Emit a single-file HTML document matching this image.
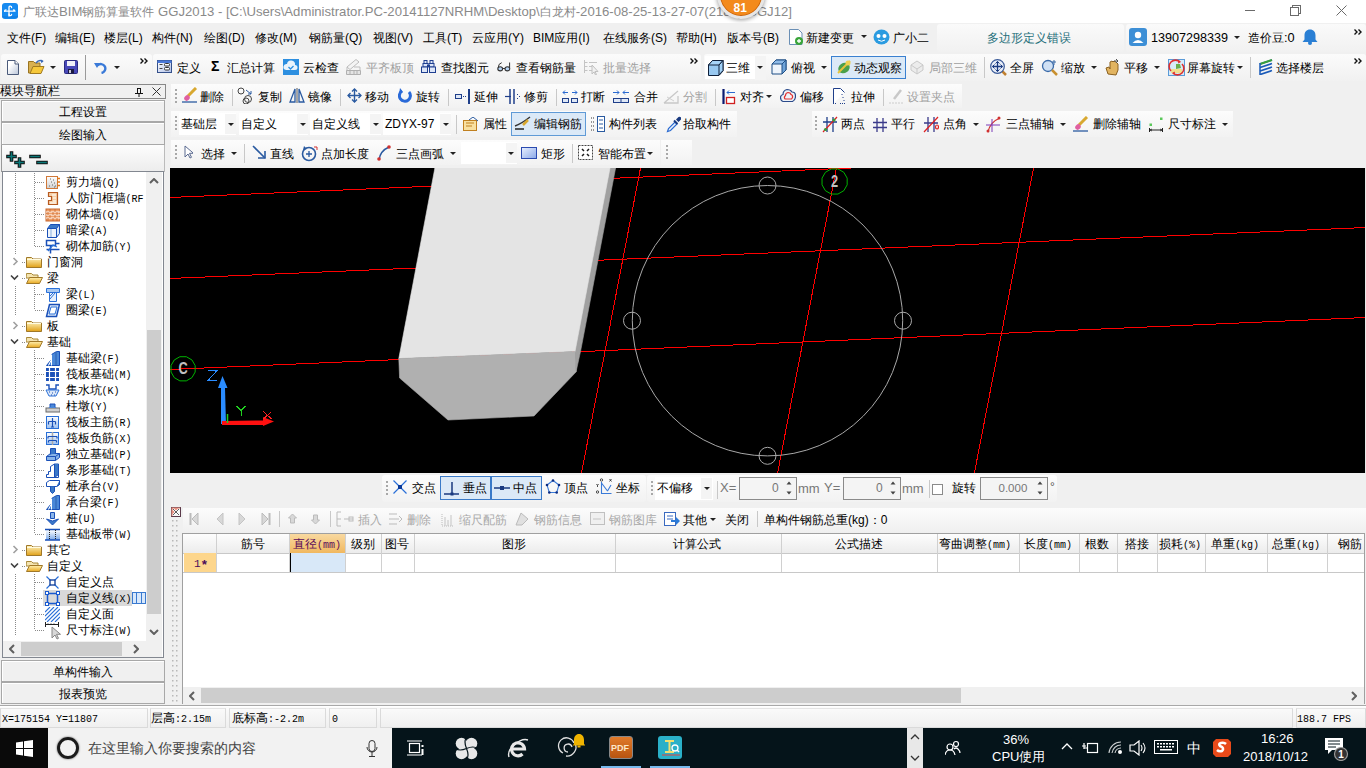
<!DOCTYPE html><html><head><meta charset="utf-8"><style>
*{margin:0;padding:0;box-sizing:border-box}
html,body{width:1366px;height:768px;overflow:hidden;background:#f0f0f0;font-family:'Liberation Sans',sans-serif;font-size:12px;color:#000}
.t{position:absolute;white-space:nowrap}
.m{font-family:'Liberation Mono',monospace;font-size:10px}
svg{display:block}
</style></head><body>
<div style="position:absolute;left:0px;top:0px;width:1366px;height:23px;background:#fff"></div>
<svg style="position:absolute;left:2px;top:3px;" width="16" height="16" viewBox="0 0 16 16"><rect x="0" y="0" width="16" height="16" rx="3" fill="#168af0"/><path d="M0 14h16v-1.5" stroke="#0a6ac8" stroke-width="1" fill="none" opacity=".5"/><g stroke="#fff" stroke-width="1.3" fill="none" stroke-linecap="round"><path d="M7 13V4.2a1.3 1.3 0 0 1 2.6 .3"/><path d="M7 11.2a1.3 1.3 0 0 0 2.6 .3"/><path d="M2.6 8.2h10.3a1.4 1.4 0 0 0-1.4-1.4"/><path d="M2.6 8.2a1.4 1.4 0 0 1 1.4-1.4"/></g></svg>
<div class="t" style="left:23px;top:3.5px;font-size:13.15px;line-height:16px;color:#8a8a8a;font-family:'Liberation Sans',sans-serif;"><span style="font-size:12px">广联达</span>BIM<span style="font-size:12px">钢筋算量软件</span> GGJ2013 - [C:\Users\Administrator.PC-20141127NRHM\Desktop\<span style="font-size:12px">白龙村</span>-2016-08-25-13-27-07(2188)-GGJ12]</div>
<div style="position:absolute;left:717px;top:-29px;width:48px;height:48px;border-radius:50%;background:#f38a1c;border:3px solid #e6e6e6;box-shadow:0 1px 4px rgba(0,0,0,.4), inset 0 0 0 1px #c8620c"></div>
<div class="t" style="left:733.5px;top:-0.5px;font-size:12px;line-height:16px;color:#fff;font-family:'Liberation Sans',sans-serif;font-weight:bold">81</div>
<div style="position:absolute;left:1245px;top:10px;width:10px;height:1px;background:#6a6a6a"></div>
<div style="position:absolute;left:1292px;top:5px;width:9px;height:9px;border:1px solid #6a6a6a;background:#fff"></div>
<div style="position:absolute;left:1290px;top:7px;width:9px;height:9px;border:1px solid #6a6a6a;background:#fff"></div>
<svg style="position:absolute;left:1336px;top:5px;" width="11" height="11" viewBox="0 0 11 11"><path d="M0.5 0.5L10.5 10.5M10.5 0.5L0.5 10.5" stroke="#6a6a6a" stroke-width="1"/></svg>
<div style="position:absolute;left:0px;top:23px;width:1366px;height:30px;background:#f0f0f0"></div>
<div class="t" style="left:7px;top:29.5px;font-size:12px;line-height:16px;color:#000;font-family:'Liberation Sans',sans-serif;">文件(F)</div>
<div class="t" style="left:55px;top:29.5px;font-size:12px;line-height:16px;color:#000;font-family:'Liberation Sans',sans-serif;">编辑(E)</div>
<div class="t" style="left:104px;top:29.5px;font-size:12px;line-height:16px;color:#000;font-family:'Liberation Sans',sans-serif;">楼层(L)</div>
<div class="t" style="left:152px;top:29.5px;font-size:12px;line-height:16px;color:#000;font-family:'Liberation Sans',sans-serif;">构件(N)</div>
<div class="t" style="left:204px;top:29.5px;font-size:12px;line-height:16px;color:#000;font-family:'Liberation Sans',sans-serif;">绘图(D)</div>
<div class="t" style="left:255px;top:29.5px;font-size:12px;line-height:16px;color:#000;font-family:'Liberation Sans',sans-serif;">修改(M)</div>
<div class="t" style="left:309px;top:29.5px;font-size:12px;line-height:16px;color:#000;font-family:'Liberation Sans',sans-serif;">钢筋量(Q)</div>
<div class="t" style="left:373px;top:29.5px;font-size:12px;line-height:16px;color:#000;font-family:'Liberation Sans',sans-serif;">视图(V)</div>
<div class="t" style="left:423px;top:29.5px;font-size:12px;line-height:16px;color:#000;font-family:'Liberation Sans',sans-serif;">工具(T)</div>
<div class="t" style="left:472px;top:29.5px;font-size:12px;line-height:16px;color:#000;font-family:'Liberation Sans',sans-serif;">云应用(Y)</div>
<div class="t" style="left:533px;top:29.5px;font-size:12px;line-height:16px;color:#000;font-family:'Liberation Sans',sans-serif;">BIM应用(I)</div>
<div class="t" style="left:603px;top:29.5px;font-size:12px;line-height:16px;color:#000;font-family:'Liberation Sans',sans-serif;">在线服务(S)</div>
<div class="t" style="left:676px;top:29.5px;font-size:12px;line-height:16px;color:#000;font-family:'Liberation Sans',sans-serif;">帮助(H)</div>
<div class="t" style="left:727px;top:29.5px;font-size:12px;line-height:16px;color:#000;font-family:'Liberation Sans',sans-serif;">版本号(B)</div>
<svg style="position:absolute;left:788px;top:28px;" width="16" height="18" viewBox="0 0 16 18"><path d="M1.5 1.5h9l3.5 3.5v11.5h-12.5z" fill="#fff" stroke="#6a8fb5"/><circle cx="11" cy="13" r="4" fill="#3aa53a"/><path d="M9 13h4M11 11v4" stroke="#fff" stroke-width="1.3"/></svg>
<div class="t" style="left:806px;top:29.5px;font-size:12px;line-height:16px;color:#000;font-family:'Liberation Sans',sans-serif;">新建变更</div>
<svg style="position:absolute;left:861px;top:35px;" width="6" height="4" viewBox="0 0 6 4"><path d="M0 0h6l-3 3z" fill="#222"/></svg>
<svg style="position:absolute;left:873px;top:29px;" width="17" height="16" viewBox="0 0 17 16"><ellipse cx="8.5" cy="8" rx="8" ry="7.5" fill="#2a9be0"/><circle cx="5.5" cy="7" r="2" fill="#fff"/><circle cx="11.5" cy="7" r="2" fill="#fff"/><path d="M5 11q3.5 2.5 7 0" stroke="#fff" fill="none"/></svg>
<div class="t" style="left:893px;top:29.5px;font-size:12px;line-height:16px;color:#000;font-family:'Liberation Sans',sans-serif;">广小二</div>
<div style="position:absolute;left:937px;top:24px;width:187px;height:28px;background:linear-gradient(#fafafa,#f1f1f1);border-radius:3px"></div>
<div style="position:absolute;left:1126px;top:24px;width:240px;height:28px;background:linear-gradient(#fafafa,#f1f1f1);border-radius:3px"></div>
<div class="t" style="left:987px;top:29.5px;font-size:12px;line-height:16px;color:#1f6f7a;font-family:'Liberation Sans',sans-serif;">多边形定义错误</div>
<svg style="position:absolute;left:1129px;top:28px;" width="18" height="18" viewBox="0 0 18 18"><rect x="0" y="0" width="18" height="18" rx="3" fill="#3d8fd6"/><circle cx="9" cy="7" r="3.2" fill="#fff"/><path d="M3.5 15q5.5-6 11 0z" fill="#fff"/></svg>
<div class="t" style="left:1151px;top:29.5px;font-size:12.6px;line-height:16px;color:#000;font-family:'Liberation Sans',sans-serif;">13907298339</div>
<svg style="position:absolute;left:1234px;top:36px;" width="6" height="4" viewBox="0 0 6 4"><path d="M0 0h6l-3 3z" fill="#222"/></svg>
<div class="t" style="left:1248px;top:29.5px;font-size:12.8px;line-height:16px;color:#000;font-family:'Liberation Sans',sans-serif;"><span style="font-size:12px">造价豆</span>:0</div>
<svg style="position:absolute;left:1302px;top:28px;" width="16" height="17" viewBox="0 0 16 17"><path d="M8 1.5c-3.5 0-5.5 2.5-5.5 6v4l-2 2.5h15l-2-2.5v-4c0-3.5-2-6-5.5-6z" fill="#2a7fd4"/><circle cx="8" cy="15" r="2" fill="#2a7fd4"/></svg>
<svg style="position:absolute;left:1354px;top:29px;" width="8" height="6" viewBox="0 0 8 6"><path d="M0.5 0.5l2.5 2.5-2.5 2.5M4.5 0.5l2.5 2.5-2.5 2.5" stroke="#111" stroke-width="1.4" fill="none"/></svg>
<div style="position:absolute;left:1px;top:54px;width:151px;height:27px;background:linear-gradient(#fbfbfb,#f1f1f1);border-radius:3px"></div>
<div style="position:absolute;left:153px;top:54px;width:548px;height:27px;background:linear-gradient(#fbfbfb,#f1f1f1);border-radius:3px"></div>
<div style="position:absolute;left:704px;top:54px;width:662px;height:27px;background:linear-gradient(#fbfbfb,#f1f1f1);border-radius:3px"></div>
<svg style="position:absolute;left:7px;top:60px;" width="12" height="15" viewBox="0 0 12 15"><defs><linearGradient id="gnd" x1="0" y1="0" x2="1" y2="1"><stop offset="0.3" stop-color="#fff"/><stop offset="1" stop-color="#b8c4d8"/></linearGradient></defs><path d="M0.5 0.5h7.5l3.5 3.5v10.5h-11z" fill="url(#gnd)" stroke="#4a5a7a"/><path d="M8 0.5v3.5h3.5" fill="#fff" stroke="#4a5a7a"/></svg>
<svg style="position:absolute;left:28px;top:59px;" width="17" height="15" viewBox="0 0 17 15"><path d="M0.5 2.5h5l1.5 1.5h5v10h-11.5z" fill="#d8b050" stroke="#9a7420"/><path d="M2 14.5l3-7h11l-3 7z" fill="#f6c83a" stroke="#a07a20"/><path d="M8 4q3-4 7-1.5" stroke="#3a6ab8" fill="none" stroke-width="1.5"/><path d="M13 0.5l2.5 2-2.5 1.5" fill="#3a6ab8"/></svg>
<svg style="position:absolute;left:50px;top:66px;" width="6" height="4" viewBox="0 0 6 4"><path d="M0 0h6l-3 3z" fill="#222"/></svg>
<svg style="position:absolute;left:64px;top:60px;" width="14" height="14" viewBox="0 0 14 14"><rect x="0.5" y="0.5" width="13" height="13" rx="1" fill="#4848b8" stroke="#2a2a80"/><rect x="3" y="1" width="8" height="5" fill="#f0f0f8"/><rect x="4" y="9" width="6" height="4.5" fill="#1a1a40"/><rect x="5" y="10" width="2" height="3" fill="#c8c8d8"/></svg>
<div style="position:absolute;left:85px;top:55px;width:1px;height:25px;background:#9a9a9a"></div>
<svg style="position:absolute;left:94px;top:60px;" width="13" height="14" viewBox="0 0 13 14"><path d="M3.5 5.5a4.5 4.5 0 1 1 4 7.5" fill="none" stroke="#3a7ad8" stroke-width="2.4"/><path d="M0 3l6 0-3 5z" fill="#3a7ad8"/></svg>
<svg style="position:absolute;left:114px;top:66px;" width="6" height="4" viewBox="0 0 6 4"><path d="M0 0h6l-3 3z" fill="#222"/></svg>
<svg style="position:absolute;left:140px;top:58px;" width="8" height="6" viewBox="0 0 8 6"><path d="M0.5 0.5l2.5 2.5-2.5 2.5M4.5 0.5l2.5 2.5-2.5 2.5" stroke="#111" stroke-width="1.4" fill="none"/></svg>
<svg style="position:absolute;left:157px;top:60px;" width="15" height="13" viewBox="0 0 15 13"><defs><linearGradient id="gdy" x1="0" y1="0" x2="1" y2="1"><stop offset="0" stop-color="#fff"/><stop offset="1" stop-color="#b0c0e8"/></linearGradient></defs><rect x="0.5" y="0.5" width="14" height="12" fill="url(#gdy)" stroke="#34508a"/><rect x="0.5" y="0.5" width="14" height="2.5" fill="#4a78d8"/><path d="M2.5 4.5h3M2.5 8.5h3" stroke="#444" stroke-width="1.2"/><rect x="7.5" y="3.5" width="5" height="2.5" rx="1" fill="#fff" stroke="#333"/><rect x="7.5" y="7.5" width="5" height="2.5" rx="1" fill="#fff" stroke="#333"/></svg>
<div class="t" style="left:177px;top:59.5px;font-size:12px;line-height:16px;color:#000;font-family:'Liberation Sans',sans-serif;">定义</div>
<div class="t" style="left:211px;top:57.5px;font-size:14px;line-height:16px;color:#000;font-family:'Liberation Sans',sans-serif;font-weight:bold">Σ</div>
<div class="t" style="left:227px;top:59.5px;font-size:12px;line-height:16px;color:#000;font-family:'Liberation Sans',sans-serif;">汇总计算</div>
<svg style="position:absolute;left:283px;top:59px;" width="16" height="16" viewBox="0 0 16 16"><rect x="0" y="0" width="16" height="16" fill="#2d8fe0"/><path d="M3 11a3 3 0 0 1 1-6a4 4 0 0 1 8 1a2.5 2.5 0 0 1 0 5z" fill="#eaf4fc"/><path d="M5.5 8l2 2 3-3" stroke="#2d8fe0" fill="none" stroke-width="1.3"/></svg>
<div class="t" style="left:303px;top:59.5px;font-size:12px;line-height:16px;color:#000;font-family:'Liberation Sans',sans-serif;">云检查</div>
<svg style="position:absolute;left:346px;top:58px;" width="15" height="17" viewBox="0 0 15 17"><path d="M1 9l9-7.5 3 2.5-9 7.5z" fill="#f4f4f4" stroke="#bdbdbd"/><path d="M1 9v4h3" fill="none" stroke="#bdbdbd"/><path d="M0.5 12.5h14v4h-14zM4 12.5v4M8 12.5v4M11 12.5v4" fill="#e4e4e4" stroke="#b0b0b0"/><path d="M8 9h6v3.5" fill="none" stroke="#bdbdbd"/></svg>
<div class="t" style="left:366px;top:59.5px;font-size:12px;line-height:16px;color:#a0a0a0;font-family:'Liberation Sans',sans-serif;">平齐板顶</div>
<svg style="position:absolute;left:421px;top:60px;" width="15" height="13" viewBox="0 0 15 13"><g fill="#dde6f8" stroke="#1f3f90"><rect x="3" y="0.5" width="3" height="3"/><rect x="9" y="0.5" width="3" height="3"/><rect x="2" y="3.5" width="5" height="3.5"/><rect x="8" y="3.5" width="5" height="3.5"/><rect x="0.5" y="7" width="6" height="5.5"/><rect x="8.5" y="7" width="6" height="5.5"/></g><rect x="6" y="5" width="3" height="2" fill="#1f3f90"/></svg>
<div class="t" style="left:441px;top:59.5px;font-size:12px;line-height:16px;color:#000;font-family:'Liberation Sans',sans-serif;">查找图元</div>
<svg style="position:absolute;left:497px;top:62px;" width="14" height="10" viewBox="0 0 14 10"><path d="M1.2 6q0-4.5 3.5-5.3M12.6 6V0.5" fill="none" stroke="#333" stroke-width="1"/><ellipse cx="3.2" cy="6.8" rx="2.4" ry="2.1" fill="#b8d4f4" stroke="#333" stroke-width="1.1"/><ellipse cx="10.4" cy="6.8" rx="2.4" ry="2.1" fill="#b8d4f4" stroke="#333" stroke-width="1.1"/><path d="M5.6 6.5h2.4" stroke="#333"/></svg>
<div class="t" style="left:516px;top:59.5px;font-size:12px;line-height:16px;color:#000;font-family:'Liberation Sans',sans-serif;">查看钢筋量</div>
<svg style="position:absolute;left:584px;top:59px;" width="15" height="16" viewBox="0 0 15 16"><path d="M0.5 1v13M0.5 3.5h3M0.5 7.5h3M0.5 11.5h3M5 3.5h8M5 7.5h5M5 11.5h4" stroke="#c4c4c4"/><path d="M8 6v9l2-2 1.5 3 1-.5-1.5-3h3z" fill="#f0f0f0" stroke="#c0c0c0"/></svg>
<div class="t" style="left:603px;top:59.5px;font-size:12px;line-height:16px;color:#a0a0a0;font-family:'Liberation Sans',sans-serif;">批量选择</div>
<svg style="position:absolute;left:690px;top:58px;" width="8" height="6" viewBox="0 0 8 6"><path d="M0.5 0.5l2.5 2.5-2.5 2.5M4.5 0.5l2.5 2.5-2.5 2.5" stroke="#111" stroke-width="1.4" fill="none"/></svg>
<div style="position:absolute;left:705px;top:56px;width:50px;height:23px;background:#fff"></div>
<svg style="position:absolute;left:708px;top:60px;" width="16" height="16" viewBox="0 0 16 16"><path d="M0.5 5l4-4.5h10.5v10.5l-4 4.5H0.5z" fill="#98c8f0" stroke="#10203a"/><path d="M0.5 5l4-4.5h10.5l-4 4.5z" fill="#a8d4f8" stroke="#10203a"/><path d="M11 5v10l4-4.5V0.5z" fill="#a0d0f6" stroke="#10203a"/></svg>
<div class="t" style="left:726px;top:59.5px;font-size:12px;line-height:16px;color:#000;font-family:'Liberation Sans',sans-serif;">三维</div>
<div style="position:absolute;left:755px;top:56px;width:11px;height:24px;background:#f4f4f4"></div>
<svg style="position:absolute;left:757px;top:66px;" width="6" height="4" viewBox="0 0 6 4"><path d="M0 0h6l-3 3z" fill="#222"/></svg>
<svg style="position:absolute;left:771px;top:59px;" width="16" height="16" viewBox="0 0 16 16"><path d="M1 5l4-4h10v10l-4 4H1z" fill="#eef4fb" stroke="#1e4f85"/><path d="M1 5l4-4h10l-4 4z" fill="#8fbbe8" stroke="#1e4f85"/><path d="M11 5v10l4-4V1z" fill="#6fa3d8" stroke="#1e4f85"/></svg>
<div class="t" style="left:791px;top:59.5px;font-size:12px;line-height:16px;color:#000;font-family:'Liberation Sans',sans-serif;">俯视</div>
<svg style="position:absolute;left:821px;top:66px;" width="6" height="4" viewBox="0 0 6 4"><path d="M0 0h6l-3 3z" fill="#222"/></svg>
<div style="position:absolute;left:831px;top:56px;width:75px;height:23px;background:#dbe9f7;border:1px solid #3a80d0"></div>
<svg style="position:absolute;left:836px;top:59px;" width="16" height="16" viewBox="0 0 16 16"><ellipse cx="8" cy="9" rx="6" ry="5" fill="#4aa04a" transform="rotate(-35 8 9)"/><path d="M2 14L14 2" stroke="#e6c23a" stroke-width="2"/><circle cx="12" cy="4" r="2.5" fill="#f0d050"/></svg>
<div class="t" style="left:854px;top:59.5px;font-size:12px;line-height:16px;color:#000;font-family:'Liberation Sans',sans-serif;">动态观察</div>
<svg style="position:absolute;left:909px;top:59px;" width="16" height="16" viewBox="0 0 16 16"><path d="M2 6l6-4 6 4v5l-6 4-6-4z" fill="#ececec" stroke="#c9c9c9"/><path d="M2 6l6 4 6-4M8 10v5" stroke="#c9c9c9" fill="none"/></svg>
<div class="t" style="left:929px;top:59.5px;font-size:12px;line-height:16px;color:#a0a0a0;font-family:'Liberation Sans',sans-serif;">局部三维</div>
<div style="position:absolute;left:984px;top:57px;width:1px;height:21px;background:#c8c8c8"></div>
<svg style="position:absolute;left:990px;top:59px;" width="17" height="17" viewBox="0 0 17 17"><path d="M11 11l5 5" stroke="#c08030" stroke-width="2.5"/><circle cx="7.5" cy="7.5" r="6.8" fill="#e8eef8" stroke="#3a5a98" stroke-width="1.2"/><path d="M7.5 2.5v10M2.5 7.5h10" stroke="#1a3a80" stroke-width="1.3"/><path d="M5.5 4.5l2-2 2 2M5.5 10.5l2 2 2-2M4.5 5.5l-2 2 2 2M10.5 5.5l2 2-2 2" stroke="#1a3a80" fill="none"/></svg>
<div class="t" style="left:1010px;top:59.5px;font-size:12px;line-height:16px;color:#000;font-family:'Liberation Sans',sans-serif;">全屏</div>
<svg style="position:absolute;left:1041px;top:59px;" width="17" height="17" viewBox="0 0 17 17"><circle cx="7" cy="7" r="5.5" fill="#cfe0f4" stroke="#3a6aa8" stroke-width="1.3"/><path d="M11 11l5 5" stroke="#c89030" stroke-width="2.5"/><path d="M13 1v5M11 3h4" stroke="#3a6aa8"/></svg>
<div class="t" style="left:1061px;top:59.5px;font-size:12px;line-height:16px;color:#000;font-family:'Liberation Sans',sans-serif;">缩放</div>
<svg style="position:absolute;left:1091px;top:66px;" width="6" height="4" viewBox="0 0 6 4"><path d="M0 0h6l-3 3z" fill="#222"/></svg>
<svg style="position:absolute;left:1105px;top:58px;" width="16" height="18" viewBox="0 0 16 18"><path d="M3 16l-2-6 3-1 1 2V4l2-1 1 1 1-1 2 1 1 1 1 1v6l-2 5z" fill="#e2b460" stroke="#8a6020"/><path d="M11 1l2 2-2 2M13 3H9" stroke="#555" fill="none"/></svg>
<div class="t" style="left:1124px;top:59.5px;font-size:12px;line-height:16px;color:#000;font-family:'Liberation Sans',sans-serif;">平移</div>
<svg style="position:absolute;left:1154px;top:66px;" width="6" height="4" viewBox="0 0 6 4"><path d="M0 0h6l-3 3z" fill="#222"/></svg>
<svg style="position:absolute;left:1168px;top:59px;" width="17" height="17" viewBox="0 0 17 17"><rect x="0.5" y="0.5" width="16" height="16" fill="#d8ecf8" stroke="#5a9ad8"/><path d="M3 10h11v4H3z" fill="#f0e090"/><path d="M8 5l4 0 1 4-5 1z" fill="#6ab04a"/><path d="M3 12A6 6 0 0 1 12 3" stroke="#e03030" fill="none" stroke-width="1.6"/><path d="M14 5A6 6 0 0 1 5 14" stroke="#e03030" fill="none" stroke-width="1.6"/><path d="M10.5 1l2.5 2-3 1.5zM6.5 16l-2.5-2 3-1.5z" fill="#e03030"/></svg>
<div class="t" style="left:1187px;top:59.5px;font-size:12px;line-height:16px;color:#000;font-family:'Liberation Sans',sans-serif;">屏幕旋转</div>
<svg style="position:absolute;left:1237px;top:66px;" width="6" height="4" viewBox="0 0 6 4"><path d="M0 0h6l-3 3z" fill="#222"/></svg>
<div style="position:absolute;left:1250px;top:57px;width:1px;height:21px;background:#c8c8c8"></div>
<svg style="position:absolute;left:1258px;top:59px;" width="16" height="16" viewBox="0 0 16 16"><path d="M2 5l12-4M2 8.5l12-4M2 12l12-4M2 15.5l12-4" stroke="#1a5ab8" stroke-width="1.8"/><path d="M2 5l12-4" stroke="#3aa03a" stroke-width="2"/><path d="M2 4v12" stroke="#1a5ab8" stroke-width="1.5"/></svg>
<div class="t" style="left:1276px;top:59.5px;font-size:12px;line-height:16px;color:#000;font-family:'Liberation Sans',sans-serif;">选择楼层</div>
<svg style="position:absolute;left:1354px;top:58px;" width="8" height="6" viewBox="0 0 8 6"><path d="M0.5 0.5l2.5 2.5-2.5 2.5M4.5 0.5l2.5 2.5-2.5 2.5" stroke="#111" stroke-width="1.4" fill="none"/></svg>
<div style="position:absolute;left:0px;top:84px;width:166px;height:15px;background:#f0f0f0;border:1px solid #888;border-left:none"></div>
<div class="t" style="left:0px;top:83.5px;font-size:12px;line-height:14px;color:#000;font-family:'Liberation Sans',sans-serif;">模块导航栏</div>
<svg style="position:absolute;left:135px;top:88px;" width="8" height="9" viewBox="0 0 8 9"><path d="M2 0.5h4M2.5 0.5v5M5.5 0.5v5M0 5.5h8M4 5.5v3.5" stroke="#111" fill="none"/></svg>
<svg style="position:absolute;left:152px;top:87px;" width="9" height="9" viewBox="0 0 9 9"><path d="M0.5 0.5l8 8M8.5 0.5l-8 8" stroke="#333"/></svg>
<div style="position:absolute;left:1px;top:100px;width:164px;height:22px;background:#f0f0f0;border:1px solid #a8a8a8;box-shadow:inset 1px 1px 0 #fff"></div>
<div class="t" style="left:59px;top:104.0px;font-size:12px;line-height:16px;color:#000;font-family:'Liberation Sans',sans-serif;">工程设置</div>
<div style="position:absolute;left:1px;top:122px;width:164px;height:23px;background:#f0f0f0;border:1px solid #a8a8a8;box-shadow:inset 1px 1px 0 #fff"></div>
<div class="t" style="left:59px;top:126.5px;font-size:12px;line-height:16px;color:#000;font-family:'Liberation Sans',sans-serif;">绘图输入</div>
<div style="position:absolute;left:1px;top:145px;width:164px;height:27px;background:linear-gradient(#fdfdfd,#ececec);border-left:1px solid #999;border-right:1px solid #bbb"></div>
<svg style="position:absolute;left:6px;top:151px;" width="19" height="17" viewBox="0 0 19 17"><g stroke="#111" stroke-width="3.6" stroke-linecap="square"><path d="M2 5.5h7M5.5 2v7M10 11.5h7M13.5 8v7"/></g><g stroke="#0a7878" stroke-width="1.6" stroke-linecap="square"><path d="M2 5.5h7M5.5 2v7M10 11.5h7M13.5 8v7"/></g></svg>
<svg style="position:absolute;left:29px;top:154px;" width="19" height="12" viewBox="0 0 19 12"><g stroke="#111" stroke-width="3.6" stroke-linecap="square"><path d="M2 2.5h8M9 8.5h8"/></g><g stroke="#0a7878" stroke-width="1.6" stroke-linecap="square"><path d="M2 2.5h8M9 8.5h8"/></g></svg>
<div style="position:absolute;left:2px;top:171px;width:162px;height:487px;background:#fff;border:1px solid #828790"></div>
<div style="position:absolute;left:146px;top:172px;width:16px;height:469px;background:#f0f0f0"></div>
<div style="position:absolute;left:147px;top:330px;width:14px;height:284px;background:#cdcdcd"></div>
<svg style="position:absolute;left:149px;top:178px;" width="10" height="6" viewBox="0 0 10 6"><path d="M1 5l4-4 4 4" stroke="#606060" fill="none" stroke-width="2"/></svg>
<svg style="position:absolute;left:149px;top:629px;" width="10" height="6" viewBox="0 0 10 6"><path d="M1 1l4 4 4-4" stroke="#606060" fill="none" stroke-width="2"/></svg>
<div style="position:absolute;left:3px;top:641px;width:143px;height:16px;background:#f0f0f0"></div>
<div style="position:absolute;left:146px;top:641px;width:16px;height:16px;background:#f0f0f0"></div>
<div style="position:absolute;left:21px;top:642px;width:101px;height:14px;background:#cdcdcd"></div>
<svg style="position:absolute;left:9px;top:644px;" width="6" height="10" viewBox="0 0 6 10"><path d="M5 1L1 5l4 4" stroke="#606060" fill="none" stroke-width="2"/></svg>
<svg style="position:absolute;left:133px;top:644px;" width="6" height="10" viewBox="0 0 6 10"><path d="M1 1l4 4-4 4" stroke="#606060" fill="none" stroke-width="2"/></svg>
<div style="position:absolute;left:1px;top:660px;width:164px;height:22px;background:#f0f0f0;border:1px solid #a8a8a8;box-shadow:inset 1px 1px 0 #fff"></div>
<div class="t" style="left:53px;top:664.0px;font-size:12px;line-height:16px;color:#000;font-family:'Liberation Sans',sans-serif;">单构件输入</div>
<div style="position:absolute;left:1px;top:682px;width:164px;height:22px;background:#f0f0f0;border:1px solid #a8a8a8;box-shadow:inset 1px 1px 0 #fff"></div>
<div class="t" style="left:59px;top:686.0px;font-size:12px;line-height:16px;color:#000;font-family:'Liberation Sans',sans-serif;">报表预览</div>
<svg style="position:absolute;left:0;top:172px" width="146" height="469" viewBox="0 172 146 469"><path d="M15.5 173V254" stroke="#8a8a8a" stroke-dasharray="1 1"/><path d="M34.5 173V246" stroke="#8a8a8a" stroke-dasharray="1 1"/><path d="M15.5 286V316" stroke="#8a8a8a" stroke-dasharray="1 1"/><path d="M34.5 286V310" stroke="#8a8a8a" stroke-dasharray="1 1"/><path d="M15.5 350V540" stroke="#8a8a8a" stroke-dasharray="1 1"/><path d="M34.5 350V534" stroke="#8a8a8a" stroke-dasharray="1 1"/><path d="M15.5 574V636" stroke="#8a8a8a" stroke-dasharray="1 1"/><path d="M34.5 574V630" stroke="#8a8a8a" stroke-dasharray="1 1"/><path d="M35 182.5H44" stroke="#8a8a8a" stroke-dasharray="1 1"/><path d="M35 198.5H44" stroke="#8a8a8a" stroke-dasharray="1 1"/><path d="M35 214.5H44" stroke="#8a8a8a" stroke-dasharray="1 1"/><path d="M35 230.5H44" stroke="#8a8a8a" stroke-dasharray="1 1"/><path d="M35 246.5H44" stroke="#8a8a8a" stroke-dasharray="1 1"/><path d="M22 262.5H26" stroke="#8a8a8a" stroke-dasharray="1 1"/><path d="M22 278.5H26" stroke="#8a8a8a" stroke-dasharray="1 1"/><path d="M35 294.5H44" stroke="#8a8a8a" stroke-dasharray="1 1"/><path d="M35 310.5H44" stroke="#8a8a8a" stroke-dasharray="1 1"/><path d="M22 326.5H26" stroke="#8a8a8a" stroke-dasharray="1 1"/><path d="M22 342.5H26" stroke="#8a8a8a" stroke-dasharray="1 1"/><path d="M35 358.5H44" stroke="#8a8a8a" stroke-dasharray="1 1"/><path d="M35 374.5H44" stroke="#8a8a8a" stroke-dasharray="1 1"/><path d="M35 390.5H44" stroke="#8a8a8a" stroke-dasharray="1 1"/><path d="M35 406.5H44" stroke="#8a8a8a" stroke-dasharray="1 1"/><path d="M35 422.5H44" stroke="#8a8a8a" stroke-dasharray="1 1"/><path d="M35 438.5H44" stroke="#8a8a8a" stroke-dasharray="1 1"/><path d="M35 454.5H44" stroke="#8a8a8a" stroke-dasharray="1 1"/><path d="M35 470.5H44" stroke="#8a8a8a" stroke-dasharray="1 1"/><path d="M35 486.5H44" stroke="#8a8a8a" stroke-dasharray="1 1"/><path d="M35 502.5H44" stroke="#8a8a8a" stroke-dasharray="1 1"/><path d="M35 518.5H44" stroke="#8a8a8a" stroke-dasharray="1 1"/><path d="M35 534.5H44" stroke="#8a8a8a" stroke-dasharray="1 1"/><path d="M22 550.5H26" stroke="#8a8a8a" stroke-dasharray="1 1"/><path d="M22 566.5H26" stroke="#8a8a8a" stroke-dasharray="1 1"/><path d="M35 582.5H44" stroke="#8a8a8a" stroke-dasharray="1 1"/><path d="M35 598.5H44" stroke="#8a8a8a" stroke-dasharray="1 1"/><path d="M35 614.5H44" stroke="#8a8a8a" stroke-dasharray="1 1"/><path d="M35 630.5H44" stroke="#8a8a8a" stroke-dasharray="1 1"/></svg>
<div style="position:absolute;left:43px;top:590px;width:89px;height:16px;background:#d9d9d9"></div>
<svg style="position:absolute;left:45px;top:175px;" width="15" height="15" viewBox="0 0 15 15"><defs><linearGradient id="gw" x1="0" y1="0" x2="0" y2="1"><stop offset="0" stop-color="#fff"/><stop offset="1" stop-color="#cfcfcf"/></linearGradient></defs><rect x="1.5" y="1.5" width="11" height="12" fill="url(#gw)" stroke="#d07838"/><path d="M4 11h1M7 10h1M9 12h1M6 7h1M9 8h1M5 4h1M8 5h1M10 11h1" stroke="#666"/><path d="M12 3.5h3M12 7h3M12 10.5h3" stroke="#e07818" stroke-width="1.3"/></svg>
<div class="t" style="left:65.5px;top:173.5px;font-size:12px;line-height:16px;color:#000;font-family:'Liberation Sans',sans-serif;">剪力墙<span class="m">(Q)</span></div>
<svg style="position:absolute;left:45px;top:191px;" width="15" height="15" viewBox="0 0 15 15"><path d="M3.5 1.5h9v12h-9v-4h3v-4h-3z" fill="#f6d0a8" stroke="#b85a20" stroke-width="1.2"/><path d="M7 4h4M8 7h3M8 10h3M5 12h6" stroke="#fff" stroke-width="1.2"/></svg>
<div class="t" style="left:65.5px;top:189.5px;font-size:12px;line-height:16px;color:#000;font-family:'Liberation Sans',sans-serif;">人防门框墙<span class="m">(RF</span></div>
<svg style="position:absolute;left:45px;top:207px;" width="15" height="15" viewBox="0 0 15 15"><rect x="1" y="2" width="14" height="12" fill="#f0a068" stroke="#c86830"/><path d="M1 5h14M1 8h14M1 11h14" stroke="#fff" stroke-width="1"/><path d="M5 2v3M10 2v3M3 5v3M8 5v3M12 5v3M5 8v3M10 8v3M3 11v3M8 11v3M12 11v3" stroke="#c86830" stroke-width=".8"/></svg>
<div class="t" style="left:65.5px;top:205.5px;font-size:12px;line-height:16px;color:#000;font-family:'Liberation Sans',sans-serif;">砌体墙<span class="m">(Q)</span></div>
<svg style="position:absolute;left:45px;top:223px;" width="15" height="15" viewBox="0 0 15 15"><path d="M2.5 5.5h9v9h-9z" fill="#eef4fb" stroke="#1a50b8"/><path d="M2.5 5.5l3-4h9l-3 4z" fill="#3a78c8" stroke="#1a50b8"/><path d="M11.5 5.5l3-4v9l-3 4z" fill="#d8e6f6" stroke="#1a50b8"/><path d="M6 6v8" stroke="#8ab0e0"/></svg>
<div class="t" style="left:65.5px;top:221.5px;font-size:12px;line-height:16px;color:#000;font-family:'Liberation Sans',sans-serif;">暗梁<span class="m">(A)</span></div>
<svg style="position:absolute;left:45px;top:239px;" width="15" height="15" viewBox="0 0 15 15"><path d="M1.5 1.5h9v5h-9zM5.5 6.5v8M1.5 10.5h13M10.5 4.5h4" fill="none" stroke="#1a50b8" stroke-width="1.5"/><path d="M3 12l5-6 4 2" fill="none" stroke="#2a70d8" stroke-width="1.2"/></svg>
<div class="t" style="left:65.5px;top:237.5px;font-size:12px;line-height:16px;color:#000;font-family:'Liberation Sans',sans-serif;">砌体加筋<span class="m">(Y)</span></div>
<svg style="position:absolute;left:12px;top:257px;" width="7" height="9" viewBox="0 0 7 9"><path d="M1.5 1l3.5 3.5-3.5 3.5" stroke="#a0a0a0" fill="none" stroke-width="1.6"/></svg>
<svg style="position:absolute;left:26px;top:256px;" width="16" height="12" viewBox="0 0 16 12"><defs><linearGradient id="fc1" x1="0" y1="0" x2="0" y2="1"><stop offset="0" stop-color="#fff4c0"/><stop offset="1" stop-color="#e0a018"/></linearGradient></defs><path d="M0.5 1.5h5l1.5 1.5h8.5v8.5h-15z" fill="url(#fc1)" stroke="#a07828"/><path d="M1 3.5h14" stroke="#fffbe0"/></svg>
<div class="t" style="left:46.5px;top:253.5px;font-size:12px;line-height:16px;color:#000;font-family:'Liberation Sans',sans-serif;">门窗洞</div>
<svg style="position:absolute;left:10px;top:274px;" width="9" height="7" viewBox="0 0 9 7"><path d="M1 1.5l3.5 3.5 3.5-3.5" stroke="#404040" fill="none" stroke-width="1.6"/></svg>
<svg style="position:absolute;left:26px;top:272px;" width="17" height="12" viewBox="0 0 17 12"><defs><linearGradient id="fo1" x1="0" y1="0" x2="0" y2="1"><stop offset="0" stop-color="#fff0b0"/><stop offset="1" stop-color="#e8a820"/></linearGradient></defs><path d="M0.5 1.5h5l1.5 1.5h5v3h-12z" fill="#f4e4b0" stroke="#a88838"/><path d="M0.5 11.5l3-6h13l-3 6z" fill="url(#fo1)" stroke="#a07828"/></svg>
<div class="t" style="left:46.5px;top:269.5px;font-size:12px;line-height:16px;color:#000;font-family:'Liberation Sans',sans-serif;">梁</div>
<svg style="position:absolute;left:45px;top:287px;" width="15" height="15" viewBox="0 0 15 15"><path d="M1.5 1.5h13v4h-13z" fill="#a8c8f0" stroke="#2a70d8"/><path d="M4.5 5.5h7v9h-7z" fill="#e6f0fc" stroke="#2a70d8"/><path d="M5 12l5-6M5 9l3-3" stroke="#2a70d8"/></svg>
<div class="t" style="left:65.5px;top:285.5px;font-size:12px;line-height:16px;color:#000;font-family:'Liberation Sans',sans-serif;">梁<span class="m">(L)</span></div>
<svg style="position:absolute;left:45px;top:303px;" width="15" height="15" viewBox="0 0 15 15"><path d="M4.5 1.5h10l-3 12h-10z" fill="#dce8f8" stroke="#1a50b8" stroke-width="1.5"/><path d="M6 4h6l-2 7H4z" fill="#fff" stroke="#2a70d8"/></svg>
<div class="t" style="left:65.5px;top:301.5px;font-size:12px;line-height:16px;color:#000;font-family:'Liberation Sans',sans-serif;">圈梁<span class="m">(E)</span></div>
<svg style="position:absolute;left:12px;top:321px;" width="7" height="9" viewBox="0 0 7 9"><path d="M1.5 1l3.5 3.5-3.5 3.5" stroke="#a0a0a0" fill="none" stroke-width="1.6"/></svg>
<svg style="position:absolute;left:26px;top:320px;" width="16" height="12" viewBox="0 0 16 12"><defs><linearGradient id="fc1" x1="0" y1="0" x2="0" y2="1"><stop offset="0" stop-color="#fff4c0"/><stop offset="1" stop-color="#e0a018"/></linearGradient></defs><path d="M0.5 1.5h5l1.5 1.5h8.5v8.5h-15z" fill="url(#fc1)" stroke="#a07828"/><path d="M1 3.5h14" stroke="#fffbe0"/></svg>
<div class="t" style="left:46.5px;top:317.5px;font-size:12px;line-height:16px;color:#000;font-family:'Liberation Sans',sans-serif;">板</div>
<svg style="position:absolute;left:10px;top:338px;" width="9" height="7" viewBox="0 0 9 7"><path d="M1 1.5l3.5 3.5 3.5-3.5" stroke="#404040" fill="none" stroke-width="1.6"/></svg>
<svg style="position:absolute;left:26px;top:336px;" width="17" height="12" viewBox="0 0 17 12"><defs><linearGradient id="fo1" x1="0" y1="0" x2="0" y2="1"><stop offset="0" stop-color="#fff0b0"/><stop offset="1" stop-color="#e8a820"/></linearGradient></defs><path d="M0.5 1.5h5l1.5 1.5h5v3h-12z" fill="#f4e4b0" stroke="#a88838"/><path d="M0.5 11.5l3-6h13l-3 6z" fill="url(#fo1)" stroke="#a07828"/></svg>
<div class="t" style="left:46.5px;top:333.5px;font-size:12px;line-height:16px;color:#000;font-family:'Liberation Sans',sans-serif;">基础</div>
<svg style="position:absolute;left:45px;top:351px;" width="15" height="15" viewBox="0 0 15 15"><path d="M1.5 14.5l5-6v-5l5-3h3v14z" fill="#4a88d8" stroke="#1a50b8"/><path d="M6.5 3.5v11M6.5 8.5l-3 6" stroke="#fff"/><path d="M11 1v13" stroke="#2a60b0"/></svg>
<div class="t" style="left:65.5px;top:349.5px;font-size:12px;line-height:16px;color:#000;font-family:'Liberation Sans',sans-serif;">基础梁<span class="m">(F)</span></div>
<svg style="position:absolute;left:45px;top:367px;" width="15" height="15" viewBox="0 0 15 15"><rect x="1" y="1" width="13" height="13" fill="#1a50b8"/><path d="M1 4.5h13M1 10.5h13M4.5 1v13M10.5 1v13" stroke="#fff" stroke-width="1.2"/><rect x="5.5" y="5.5" width="4" height="4" fill="#1a50b8"/></svg>
<div class="t" style="left:65.5px;top:365.5px;font-size:12px;line-height:16px;color:#000;font-family:'Liberation Sans',sans-serif;">筏板基础<span class="m">(M)</span></div>
<svg style="position:absolute;left:45px;top:383px;" width="15" height="15" viewBox="0 0 15 15"><path d="M1 2h3v4h7V2h3" fill="none" stroke="#1a50b8" stroke-width="1.4"/><path d="M1 7l3 6h7l3-6z" fill="#dce8f8" stroke="#2a70d8"/><path d="M4 9h1M7 10h1M10 9h1M6 12h1M9 12h1" stroke="#1a50b8"/></svg>
<div class="t" style="left:65.5px;top:381.5px;font-size:12px;line-height:16px;color:#000;font-family:'Liberation Sans',sans-serif;">集水坑<span class="m">(K)</span></div>
<svg style="position:absolute;left:45px;top:399px;" width="15" height="15" viewBox="0 0 15 15"><rect x="1" y="9" width="14" height="4" fill="#d0d0d0" stroke="#6a6a6a"/><path d="M5 9V5h5v4" fill="#4a88d8" stroke="#1a50b8"/><path d="M3 9q4-3 9 0" fill="#4a88d8"/></svg>
<div class="t" style="left:65.5px;top:397.5px;font-size:12px;line-height:16px;color:#000;font-family:'Liberation Sans',sans-serif;">柱墩<span class="m">(Y)</span></div>
<svg style="position:absolute;left:45px;top:415px;" width="15" height="15" viewBox="0 0 15 15"><defs><linearGradient id="gz" x1="0" y1="0" x2="0" y2="1"><stop offset="0" stop-color="#fff"/><stop offset="1" stop-color="#9cc0f0"/></linearGradient></defs><rect x="1.5" y="1.5" width="12" height="12" fill="url(#gz)" stroke="#2a70d8"/><path d="M7.5 3v9M3.5 6.5h7M3.5 6.5v3M10.5 6.5v3M6 12h3" fill="none" stroke="#1a50b8" stroke-width="1.2"/></svg>
<div class="t" style="left:65.5px;top:413.5px;font-size:12px;line-height:16px;color:#000;font-family:'Liberation Sans',sans-serif;">筏板主筋<span class="m">(R)</span></div>
<svg style="position:absolute;left:45px;top:431px;" width="15" height="15" viewBox="0 0 15 15"><rect x="1.5" y="1.5" width="12" height="12" fill="url(#gz)" stroke="#2a70d8"/><path d="M7.5 1v13" stroke="#aaa" stroke-width="1.5"/><path d="M3 5.5h9M3.5 9.5h8M3 5.5v2M12 5.5v2M3.5 9.5v2M11.5 9.5v2" fill="none" stroke="#1a50b8" stroke-width="1.2"/></svg>
<div class="t" style="left:65.5px;top:429.5px;font-size:12px;line-height:16px;color:#000;font-family:'Liberation Sans',sans-serif;">筏板负筋<span class="m">(X)</span></div>
<svg style="position:absolute;left:45px;top:447px;" width="15" height="15" viewBox="0 0 15 15"><path d="M1.5 9.5l4-3h9v4l-4 3h-9z" fill="#8ab4e8" stroke="#1a50b8"/><path d="M1.5 9.5h9l4-3M10.5 9.5v4" fill="none" stroke="#1a50b8"/><path d="M5.5 7.5v-6h5v5" fill="#3a78c8" stroke="#1a50b8"/></svg>
<div class="t" style="left:65.5px;top:445.5px;font-size:12px;line-height:16px;color:#000;font-family:'Liberation Sans',sans-serif;">独立基础<span class="m">(P)</span></div>
<svg style="position:absolute;left:45px;top:463px;" width="15" height="15" viewBox="0 0 15 15"><path d="M1.5 14.5v-3h2v-3h2v-5l4-2.5h4v13.5z" fill="#fff" stroke="#1a50b8"/><path d="M9.5 1v13.5l4-3V1" fill="#3a78c8" stroke="#1a50b8"/></svg>
<div class="t" style="left:65.5px;top:461.5px;font-size:12px;line-height:16px;color:#000;font-family:'Liberation Sans',sans-serif;">条形基础<span class="m">(T)</span></div>
<svg style="position:absolute;left:45px;top:479px;" width="15" height="15" viewBox="0 0 15 15"><path d="M1.5 3.5l3-2h10v4l-3 2h-10z" fill="#fff" stroke="#1a50b8"/><path d="M11.5 7.5l3-2v-4" fill="#3a78c8" stroke="#1a50b8"/><path d="M5.5 7.5v5l2 2 2-2v-5" fill="#3a78c8" stroke="#1a50b8"/></svg>
<div class="t" style="left:65.5px;top:477.5px;font-size:12px;line-height:16px;color:#000;font-family:'Liberation Sans',sans-serif;">桩承台<span class="m">(V)</span></div>
<svg style="position:absolute;left:45px;top:495px;" width="15" height="15" viewBox="0 0 15 15"><path d="M1.5 14.5l5-6v-5l5-3h3v14z" fill="#4a88d8" stroke="#1a50b8"/><path d="M6.5 3.5v11M6.5 8.5l-3 6" stroke="#fff"/><path d="M11 1v13" stroke="#2a60b0"/></svg>
<div class="t" style="left:65.5px;top:493.5px;font-size:12px;line-height:16px;color:#000;font-family:'Liberation Sans',sans-serif;">承台梁<span class="m">(F)</span></div>
<svg style="position:absolute;left:45px;top:511px;" width="15" height="15" viewBox="0 0 15 15"><path d="M5.5 1.5h4v6h-4z" fill="#8ab4e8" stroke="#1a50b8"/><path d="M1.5 8l6 6 6-6-6 2z" fill="#3a78c8" stroke="#1a50b8"/></svg>
<div class="t" style="left:65.5px;top:509.5px;font-size:12px;line-height:16px;color:#000;font-family:'Liberation Sans',sans-serif;">桩<span class="m">(U)</span></div>
<svg style="position:absolute;left:45px;top:527px;" width="15" height="15" viewBox="0 0 15 15"><defs><linearGradient id="gb" x1="0" y1="0" x2="0" y2="1"><stop offset="0" stop-color="#fff"/><stop offset="1" stop-color="#7aa8e8"/></linearGradient></defs><rect x="1" y="3" width="14" height="10" fill="url(#gb)"/><path d="M0 2.5h15M0 13h15" stroke="#1a50b8" stroke-width="1.5"/><path d="M4.5 3v10M10.5 3v10" stroke="#222" stroke-dasharray="1 1"/></svg>
<div class="t" style="left:65.5px;top:525.5px;font-size:12px;line-height:16px;color:#000;font-family:'Liberation Sans',sans-serif;">基础板带<span class="m">(W)</span></div>
<svg style="position:absolute;left:12px;top:545px;" width="7" height="9" viewBox="0 0 7 9"><path d="M1.5 1l3.5 3.5-3.5 3.5" stroke="#a0a0a0" fill="none" stroke-width="1.6"/></svg>
<svg style="position:absolute;left:26px;top:544px;" width="16" height="12" viewBox="0 0 16 12"><defs><linearGradient id="fc1" x1="0" y1="0" x2="0" y2="1"><stop offset="0" stop-color="#fff4c0"/><stop offset="1" stop-color="#e0a018"/></linearGradient></defs><path d="M0.5 1.5h5l1.5 1.5h8.5v8.5h-15z" fill="url(#fc1)" stroke="#a07828"/><path d="M1 3.5h14" stroke="#fffbe0"/></svg>
<div class="t" style="left:46.5px;top:541.5px;font-size:12px;line-height:16px;color:#000;font-family:'Liberation Sans',sans-serif;">其它</div>
<svg style="position:absolute;left:10px;top:562px;" width="9" height="7" viewBox="0 0 9 7"><path d="M1 1.5l3.5 3.5 3.5-3.5" stroke="#404040" fill="none" stroke-width="1.6"/></svg>
<svg style="position:absolute;left:26px;top:560px;" width="17" height="12" viewBox="0 0 17 12"><defs><linearGradient id="fo1" x1="0" y1="0" x2="0" y2="1"><stop offset="0" stop-color="#fff0b0"/><stop offset="1" stop-color="#e8a820"/></linearGradient></defs><path d="M0.5 1.5h5l1.5 1.5h5v3h-12z" fill="#f4e4b0" stroke="#a88838"/><path d="M0.5 11.5l3-6h13l-3 6z" fill="url(#fo1)" stroke="#a07828"/></svg>
<div class="t" style="left:46.5px;top:557.5px;font-size:12px;line-height:16px;color:#000;font-family:'Liberation Sans',sans-serif;">自定义</div>
<svg style="position:absolute;left:45px;top:575px;" width="15" height="15" viewBox="0 0 15 15"><path d="M1.5 1.5l12 12M13.5 1.5l-12 12" stroke="#2a70d8" stroke-width="1.2"/><rect x="5" y="5" width="5" height="5" fill="#fff" stroke="#0a3a98" stroke-width="1.3"/></svg>
<div class="t" style="left:65.5px;top:573.5px;font-size:12px;line-height:16px;color:#000;font-family:'Liberation Sans',sans-serif;">自定义点</div>
<svg style="position:absolute;left:45px;top:591px;" width="15" height="15" viewBox="0 0 15 15"><rect x="2.5" y="2.5" width="10" height="10" fill="none" stroke="#1a5ad0" stroke-width="1.5"/><g fill="#fff" stroke="#1a5ad0"><rect x="0.5" y="0.5" width="3" height="3"/><rect x="11.5" y="0.5" width="3" height="3"/><rect x="0.5" y="11.5" width="3" height="3"/><rect x="11.5" y="11.5" width="3" height="3"/></g></svg>
<div class="t" style="left:65.5px;top:589.5px;font-size:12px;line-height:16px;color:#000;font-family:'Liberation Sans',sans-serif;">自定义线<span class="m">(X)</span></div>
<svg style="position:absolute;left:45px;top:607px;" width="15" height="15" viewBox="0 0 15 15"><path d="M0 5L5 0M0 9L9 0M0 13L13 0M2 15L15 2M6 15L15 6M10 15L15 10" stroke="#2a70d8" stroke-width="1.1"/></svg>
<div class="t" style="left:65.5px;top:605.5px;font-size:12px;line-height:16px;color:#000;font-family:'Liberation Sans',sans-serif;">自定义面</div>
<svg style="position:absolute;left:44px;top:622px;" width="20" height="18" viewBox="0 0 20 18"><path d="M1 2.5h14M1.5 0v5M14.5 0v5" stroke="#222"/><path d="M4 1.5v1M7 1.5v1M10 1.5v1" stroke="#222"/><path d="M8 5v11l3-3 2 4 1.5-.7-2-4h4z" fill="#d8d8d8" stroke="#888"/></svg>
<div class="t" style="left:65.5px;top:621.5px;font-size:12px;line-height:16px;color:#000;font-family:'Liberation Sans',sans-serif;">尺寸标注<span class="m">(W)</span></div>
<svg style="position:absolute;left:132px;top:590px;" width="14" height="16" viewBox="0 0 14 16"><rect x="0.5" y="2.5" width="13" height="11" fill="#d8e8fb" stroke="#3a7ad0"/><path d="M4.5 3v10M9.5 3v10" stroke="#3a7ad0"/></svg>
<div style="position:absolute;left:171px;top:84px;width:791px;height:24px;background:linear-gradient(#fcfcfc,#f2f2f2)"></div>
<div style="position:absolute;left:171px;top:111px;width:566px;height:26px;background:linear-gradient(#fcfcfc,#f2f2f2)"></div>
<div style="position:absolute;left:812px;top:111px;width:421px;height:26px;background:linear-gradient(#fcfcfc,#f2f2f2)"></div>
<div style="position:absolute;left:171px;top:140px;width:489px;height:25px;background:linear-gradient(#fcfcfc,#f2f2f2)"></div>
<div style="position:absolute;left:661px;top:140px;width:31px;height:25px;background:linear-gradient(#fcfcfc,#f2f2f2)"></div>
<svg style="position:absolute;left:175px;top:89px;" width="3" height="16" viewBox="0 0 3 16"><rect x="0" y="0" width="2" height="2" fill="#a8a8a8"/><rect x="0" y="4" width="2" height="2" fill="#a8a8a8"/><rect x="0" y="8" width="2" height="2" fill="#a8a8a8"/><rect x="0" y="12" width="2" height="2" fill="#a8a8a8"/></svg>
<svg style="position:absolute;left:175px;top:116px;" width="3" height="16" viewBox="0 0 3 16"><rect x="0" y="0" width="2" height="2" fill="#a8a8a8"/><rect x="0" y="4" width="2" height="2" fill="#a8a8a8"/><rect x="0" y="8" width="2" height="2" fill="#a8a8a8"/><rect x="0" y="12" width="2" height="2" fill="#a8a8a8"/></svg>
<svg style="position:absolute;left:175px;top:145px;" width="3" height="16" viewBox="0 0 3 16"><rect x="0" y="0" width="2" height="2" fill="#a8a8a8"/><rect x="0" y="4" width="2" height="2" fill="#a8a8a8"/><rect x="0" y="8" width="2" height="2" fill="#a8a8a8"/><rect x="0" y="12" width="2" height="2" fill="#a8a8a8"/></svg>
<svg style="position:absolute;left:815px;top:116px;" width="3" height="16" viewBox="0 0 3 16"><rect x="0" y="0" width="2" height="2" fill="#a8a8a8"/><rect x="0" y="4" width="2" height="2" fill="#a8a8a8"/><rect x="0" y="8" width="2" height="2" fill="#a8a8a8"/><rect x="0" y="12" width="2" height="2" fill="#a8a8a8"/></svg>
<svg style="position:absolute;left:666px;top:145px;" width="3" height="16" viewBox="0 0 3 16"><rect x="0" y="0" width="2" height="2" fill="#a8a8a8"/><rect x="0" y="4" width="2" height="2" fill="#a8a8a8"/><rect x="0" y="8" width="2" height="2" fill="#a8a8a8"/><rect x="0" y="12" width="2" height="2" fill="#a8a8a8"/></svg>
<svg style="position:absolute;left:181px;top:87px;" width="17" height="17" viewBox="0 0 17 17"><path d="M1 15h15" stroke="#2a5aa0" stroke-width="1.3"/><path d="M15 1L7 9" stroke="#d8a830" stroke-width="3"/><ellipse cx="6" cy="11" rx="3" ry="2.5" fill="#e060a0" transform="rotate(-45 6 11)"/></svg>
<div class="t" style="left:200px;top:88.5px;font-size:12px;line-height:16px;color:#000;font-family:'Liberation Sans',sans-serif;">删除</div>
<div style="position:absolute;left:232px;top:89px;width:1px;height:17px;background:#c8c8c8"></div>
<svg style="position:absolute;left:237px;top:87px;" width="17" height="17" viewBox="0 0 17 17"><circle cx="4" cy="4" r="3" fill="none" stroke="#444"/><circle cx="11" cy="12" r="3.5" fill="none" stroke="#444"/><circle cx="9" cy="14" r="3" fill="none" stroke="#444"/><path d="M9 3l5 4M14 4v3h-3" stroke="#2a5aa0" fill="none"/></svg>
<div class="t" style="left:258px;top:88.5px;font-size:12px;line-height:16px;color:#000;font-family:'Liberation Sans',sans-serif;">复制</div>
<svg style="position:absolute;left:289px;top:88px;" width="16" height="15" viewBox="0 0 16 15"><path d="M6 1L1 14h5z" fill="none" stroke="#2a5aa0" stroke-width="1.3"/><path d="M10 1l5 13h-5z" fill="none" stroke="#2a5aa0" stroke-width="1.3"/><path d="M8 0v15" stroke="#555"/></svg>
<div class="t" style="left:308px;top:88.5px;font-size:12px;line-height:16px;color:#000;font-family:'Liberation Sans',sans-serif;">镜像</div>
<div style="position:absolute;left:340px;top:89px;width:1px;height:17px;background:#c8c8c8"></div>
<svg style="position:absolute;left:347px;top:88px;" width="15" height="15" viewBox="0 0 15 15"><path d="M7.5 1v13M1 7.5h13" stroke="#2a5aa0" stroke-width="1.4"/><path d="M5 3.5l2.5-2.5 2.5 2.5M5 11.5l2.5 2.5 2.5-2.5M3.5 5l-2.5 2.5 2.5 2.5M11.5 5l2.5 2.5-2.5 2.5" stroke="#2a5aa0" fill="none" stroke-width="1.3"/></svg>
<div class="t" style="left:365px;top:88.5px;font-size:12px;line-height:16px;color:#000;font-family:'Liberation Sans',sans-serif;">移动</div>
<svg style="position:absolute;left:398px;top:88px;" width="14" height="15" viewBox="0 0 14 15"><path d="M11 4a5.5 5.5 0 1 1-7-1" stroke="#2a6ad8" stroke-width="3" fill="none"/><path d="M2 0l3 4-4 2z" fill="#2a6ad8"/></svg>
<div class="t" style="left:416px;top:88.5px;font-size:12px;line-height:16px;color:#000;font-family:'Liberation Sans',sans-serif;">旋转</div>
<div style="position:absolute;left:448px;top:89px;width:1px;height:17px;background:#c8c8c8"></div>
<svg style="position:absolute;left:455px;top:89px;" width="16" height="15" viewBox="0 0 16 15"><rect x="0.5" y="5.5" width="6" height="4" fill="#dfe8f6" stroke="#1f3f8a"/><path d="M8 7.5h4" stroke="#1f3f8a" stroke-dasharray="1 1"/><path d="M14 0v15" stroke="#1f3f8a" stroke-width="2"/></svg>
<div class="t" style="left:474px;top:88.5px;font-size:12px;line-height:16px;color:#000;font-family:'Liberation Sans',sans-serif;">延伸</div>
<svg style="position:absolute;left:505px;top:89px;" width="16" height="15" viewBox="0 0 16 15"><path d="M0 7.5h6" stroke="#1f3f8a" stroke-width="1.2"/><path d="M5 0v15M9 0v15" stroke="#1f3f8a" stroke-width="1.5"/><path d="M12 5.5h1M12 9.5h1M14 7.5h1" stroke="#1f3f8a"/></svg>
<div class="t" style="left:524px;top:88.5px;font-size:12px;line-height:16px;color:#000;font-family:'Liberation Sans',sans-serif;">修剪</div>
<div style="position:absolute;left:556px;top:89px;width:1px;height:17px;background:#c8c8c8"></div>
<svg style="position:absolute;left:562px;top:89px;" width="16" height="15" viewBox="0 0 16 15"><path d="M1 3.5h5M10 3.5h5M3 1.5l-2 2 2 2M13 1.5l2 2-2 2" stroke="#2a6ad0" fill="none"/><rect x="0.5" y="9.5" width="6" height="4" fill="#dfe8f6" stroke="#1f3f8a"/><rect x="9.5" y="9.5" width="6" height="4" fill="#dfe8f6" stroke="#1f3f8a"/></svg>
<div class="t" style="left:581px;top:88.5px;font-size:12px;line-height:16px;color:#000;font-family:'Liberation Sans',sans-serif;">打断</div>
<svg style="position:absolute;left:613px;top:89px;" width="16" height="15" viewBox="0 0 16 15"><path d="M0 3.5h6M10 3.5h6M4 1.5l2 2-2 2M12 1.5l-2 2 2 2" stroke="#2a6ad0" fill="none"/><rect x="0.5" y="9.5" width="15" height="4" fill="#dfe8f6" stroke="#1f3f8a"/><path d="M8 9v5" stroke="#1f3f8a"/></svg>
<div class="t" style="left:634px;top:88.5px;font-size:12px;line-height:16px;color:#000;font-family:'Liberation Sans',sans-serif;">合并</div>
<svg style="position:absolute;left:663px;top:88px;" width="16" height="16" viewBox="0 0 16 16"><path d="M1 15l14-12M1 15h14V8" stroke="#c8c8c8" stroke-width="1.3" fill="none"/><path d="M4 9l7 4" stroke="#d0d0d0"/></svg>
<div class="t" style="left:683px;top:88.5px;font-size:12px;line-height:16px;color:#a0a0a0;font-family:'Liberation Sans',sans-serif;">分割</div>
<div style="position:absolute;left:715px;top:89px;width:1px;height:17px;background:#c8c8c8"></div>
<svg style="position:absolute;left:722px;top:88px;" width="14" height="17" viewBox="0 0 14 17"><path d="M1.5 1v15" stroke="#0a1a70" stroke-width="2.2"/><path d="M5 4.5h8M7 2.5l-2 2 2 2" stroke="#2a6ad0" fill="none"/><rect x="4.5" y="9.5" width="8" height="6" fill="#fff" stroke="#d02020" stroke-width="1.3"/></svg>
<div class="t" style="left:740px;top:88.5px;font-size:12px;line-height:16px;color:#000;font-family:'Liberation Sans',sans-serif;">对齐</div>
<svg style="position:absolute;left:766px;top:95px;" width="6" height="4" viewBox="0 0 6 4"><path d="M0 0h6l-3 3z" fill="#222"/></svg>
<svg style="position:absolute;left:780px;top:88px;" width="16" height="15" viewBox="0 0 16 15"><path d="M3 13.5q-2.5-1-2.5-4 0-2.5 2.5-3 0-4 4-5 3.5 0 5 2.5 3.5 0 3.5 4 0 4-3 5.5z" fill="#eef2f8" stroke="#2a4a8a" stroke-width="1.2"/><path d="M5 11q-1.5-2 .5-3.5 0-2.5 2.5-3 2.5 0 3 2 2 .5 1.5 3l-1 1.5z" fill="none" stroke="#e03030" stroke-width="1.2"/></svg>
<div class="t" style="left:800px;top:88.5px;font-size:12px;line-height:16px;color:#000;font-family:'Liberation Sans',sans-serif;">偏移</div>
<svg style="position:absolute;left:832px;top:88px;" width="15" height="16" viewBox="0 0 15 16"><path d="M1.5 15.5V0.5h7l4 4" fill="#fff" stroke="#1f3f8a"/><path d="M1 15.5h4M8 15.5h6M10 6v2M11 9v2M12 12v2" stroke="#1f3f8a" stroke-dasharray="1 1"/></svg>
<div class="t" style="left:851px;top:88.5px;font-size:12px;line-height:16px;color:#000;font-family:'Liberation Sans',sans-serif;">拉伸</div>
<div style="position:absolute;left:883px;top:89px;width:1px;height:17px;background:#c8c8c8"></div>
<svg style="position:absolute;left:888px;top:88px;" width="16" height="16" viewBox="0 0 16 16"><path d="M1 15h14" stroke="#ccc" stroke-dasharray="2 1"/><path d="M13 2L6 11" stroke="#c8c8c8" stroke-width="2.5"/></svg>
<div class="t" style="left:907px;top:88.5px;font-size:12px;line-height:16px;color:#a0a0a0;font-family:'Liberation Sans',sans-serif;">设置夹点</div>
<div style="position:absolute;left:179px;top:113px;width:57px;height:22px;background:#fff"></div>
<div style="position:absolute;left:225px;top:114px;width:11px;height:20px;background:#f4f4f4"></div>
<div class="t" style="left:181px;top:115.5px;font-size:12px;line-height:16px;color:#000;font-family:'Liberation Sans',sans-serif;">基础层</div>
<svg style="position:absolute;left:228px;top:123px;" width="6" height="4" viewBox="0 0 6 4"><path d="M0 0h6l-3 3z" fill="#222"/></svg>
<div style="position:absolute;left:239px;top:113px;width:69px;height:22px;background:#fff"></div>
<div style="position:absolute;left:297px;top:114px;width:11px;height:20px;background:#f4f4f4"></div>
<div class="t" style="left:241px;top:115.5px;font-size:12px;line-height:16px;color:#000;font-family:'Liberation Sans',sans-serif;">自定义</div>
<svg style="position:absolute;left:300px;top:123px;" width="6" height="4" viewBox="0 0 6 4"><path d="M0 0h6l-3 3z" fill="#222"/></svg>
<div style="position:absolute;left:310px;top:113px;width:71px;height:22px;background:#fff"></div>
<div style="position:absolute;left:370px;top:114px;width:11px;height:20px;background:#f4f4f4"></div>
<div class="t" style="left:312px;top:115.5px;font-size:12px;line-height:16px;color:#000;font-family:'Liberation Sans',sans-serif;">自定义线</div>
<svg style="position:absolute;left:373px;top:123px;" width="6" height="4" viewBox="0 0 6 4"><path d="M0 0h6l-3 3z" fill="#222"/></svg>
<div style="position:absolute;left:383px;top:113px;width:68px;height:22px;background:#fff"></div>
<div style="position:absolute;left:440px;top:114px;width:11px;height:20px;background:#f4f4f4"></div>
<div class="t" style="left:385px;top:115.5px;font-size:12px;line-height:16px;color:#000;font-family:'Liberation Sans',sans-serif;">ZDYX-97</div>
<svg style="position:absolute;left:443px;top:123px;" width="6" height="4" viewBox="0 0 6 4"><path d="M0 0h6l-3 3z" fill="#222"/></svg>
<div style="position:absolute;left:456px;top:115px;width:1px;height:19px;background:#c8c8c8"></div>
<svg style="position:absolute;left:463px;top:117px;" width="16" height="14" viewBox="0 0 16 14"><rect x="0.5" y="3.5" width="13" height="10" fill="#f8e0a0" stroke="#c08020"/><path d="M3 6h8M3 9h6" stroke="#c08020"/><path d="M6 3l4-3 5 4" stroke="#2a5aa0" fill="none"/></svg>
<div class="t" style="left:483px;top:115.5px;font-size:12px;line-height:16px;color:#000;font-family:'Liberation Sans',sans-serif;">属性</div>
<div style="position:absolute;left:511px;top:112px;width:75px;height:24px;background:#dbe9f7;border:1px solid #5f9ad6"></div>
<svg style="position:absolute;left:514px;top:116px;" width="17" height="15" viewBox="0 0 17 15"><path d="M1 13h9" stroke="#222" stroke-width="1.5"/><path d="M1 10q6-2 15-9" stroke="#333" stroke-width="1.5" fill="none"/><path d="M9 9l5-5" stroke="#d8a830" stroke-width="2.5"/></svg>
<div class="t" style="left:534px;top:115.5px;font-size:12px;line-height:16px;color:#000;font-family:'Liberation Sans',sans-serif;">编辑钢筋</div>
<svg style="position:absolute;left:590px;top:116px;" width="15" height="16" viewBox="0 0 15 16"><path d="M1 2h3M1 6h3M1 10h3M1 14h3" stroke="#333" stroke-dasharray="1 1"/><rect x="7.5" y="0.5" width="7" height="15" fill="#fff" stroke="#2a5aa0"/><path d="M9 4h4M9 8h4M9 12h4" stroke="#2a5aa0"/></svg>
<div class="t" style="left:609px;top:115.5px;font-size:12px;line-height:16px;color:#000;font-family:'Liberation Sans',sans-serif;">构件列表</div>
<svg style="position:absolute;left:666px;top:116px;" width="15" height="17" viewBox="0 0 15 17"><path d="M1.5 15.5l1-3 6.5-6.5 2 2-6.5 6.5z" fill="#e8f0fc" stroke="#2a6ad0" stroke-width="1.2"/><path d="M8 4.5l3.5 3.5" stroke="#1a3a80" stroke-width="2"/><path d="M10 3.5l2.5-2.5a1.8 1.8 0 0 1 2.5 2.5l-2.5 2.5z" fill="#1a3a80"/></svg>
<div class="t" style="left:683px;top:115.5px;font-size:12px;line-height:16px;color:#000;font-family:'Liberation Sans',sans-serif;">拾取构件</div>
<svg style="position:absolute;left:822px;top:116px;" width="16" height="17" viewBox="0 0 16 17"><path d="M5 1v15M11 1v15M1 6h14" stroke="#1f3f8a" stroke-width="1.3"/><path d="M1 16L15 1" stroke="#e02020" stroke-width="1.2"/><circle cx="3.5" cy="13.5" r="1.6" fill="#3a9a3a"/><circle cx="12" cy="4" r="1.6" fill="#3a9a3a"/></svg>
<div class="t" style="left:841px;top:115.5px;font-size:12px;line-height:16px;color:#000;font-family:'Liberation Sans',sans-serif;">两点</div>
<svg style="position:absolute;left:872px;top:117px;" width="16" height="15" viewBox="0 0 16 15"><path d="M5 1v14M11 1v14M1 5.5h14M1 10.5h14" stroke="#3a3a8a" stroke-width="1.3"/></svg>
<div class="t" style="left:891px;top:115.5px;font-size:12px;line-height:16px;color:#000;font-family:'Liberation Sans',sans-serif;">平行</div>
<svg style="position:absolute;left:923px;top:116px;" width="16" height="17" viewBox="0 0 16 17"><path d="M5 1v15M11 1v15M1 7h14" stroke="#3a3a8a" stroke-width="1.3"/><path d="M1 16L15 1" stroke="#e02020" stroke-width="1.2"/><ellipse cx="14" cy="11" rx="1.5" ry="2" fill="none" stroke="#e02020" stroke-width="1.2"/></svg>
<div class="t" style="left:943px;top:115.5px;font-size:12px;line-height:16px;color:#000;font-family:'Liberation Sans',sans-serif;">点角</div>
<svg style="position:absolute;left:973px;top:123px;" width="6" height="4" viewBox="0 0 6 4"><path d="M0 0h6l-3 3z" fill="#222"/></svg>
<svg style="position:absolute;left:985px;top:116px;" width="16" height="17" viewBox="0 0 16 17"><path d="M3 16q2-10 12-14" stroke="#d03030" stroke-width="1.3" fill="none"/><path d="M7 3v13M1 9h14" stroke="#7a3ab8"/><circle cx="3" cy="15" r="1.5" fill="#d03030"/><circle cx="14" cy="2" r="1.5" fill="#d03030"/></svg>
<div class="t" style="left:1006px;top:115.5px;font-size:12px;line-height:16px;color:#000;font-family:'Liberation Sans',sans-serif;">三点辅轴</div>
<svg style="position:absolute;left:1060px;top:123px;" width="6" height="4" viewBox="0 0 6 4"><path d="M0 0h6l-3 3z" fill="#222"/></svg>
<svg style="position:absolute;left:1072px;top:116px;" width="17" height="17" viewBox="0 0 17 17"><path d="M1 15h15" stroke="#2a5aa0" stroke-width="1.3"/><path d="M15 1L7 9" stroke="#d8a830" stroke-width="3"/><ellipse cx="6" cy="11" rx="3" ry="2.5" fill="#e060a0" transform="rotate(-45 6 11)"/></svg>
<div class="t" style="left:1093px;top:115.5px;font-size:12px;line-height:16px;color:#000;font-family:'Liberation Sans',sans-serif;">删除辅轴</div>
<svg style="position:absolute;left:1148px;top:116px;" width="16" height="17" viewBox="0 0 16 17"><path d="M1.5 12v4M14.5 12v4M1.5 14h13" stroke="#222"/><path d="M4 13l-2 1 2 1M12 13l2 1-2 1" stroke="#222" fill="none" stroke-width=".8"/><rect x="1.5" y="7.5" width="2.5" height="2.5" fill="#5ac85a"/><rect x="12" y="1.5" width="2.5" height="2.5" fill="#5ac85a"/></svg>
<div class="t" style="left:1168px;top:115.5px;font-size:12px;line-height:16px;color:#000;font-family:'Liberation Sans',sans-serif;">尺寸标注</div>
<svg style="position:absolute;left:1222px;top:123px;" width="6" height="4" viewBox="0 0 6 4"><path d="M0 0h6l-3 3z" fill="#222"/></svg>
<svg style="position:absolute;left:184px;top:145px;" width="9" height="14" viewBox="0 0 9 14"><path d="M1 1v11l3-3 2 4 1.5-.7-2-4h4z" fill="#fff" stroke="#5a6a90"/></svg>
<div class="t" style="left:201px;top:145.5px;font-size:12px;line-height:16px;color:#000;font-family:'Liberation Sans',sans-serif;">选择</div>
<svg style="position:absolute;left:231px;top:152px;" width="6" height="4" viewBox="0 0 6 4"><path d="M0 0h6l-3 3z" fill="#222"/></svg>
<div style="position:absolute;left:244px;top:144px;width:1px;height:19px;background:#c8c8c8"></div>
<svg style="position:absolute;left:252px;top:145px;" width="15" height="15" viewBox="0 0 15 15"><path d="M1 1l12 12" stroke="#2a5aa0" stroke-width="1.6"/><path d="M6 13h7V6" stroke="#2a5aa0" stroke-width="1.6" fill="none"/></svg>
<div class="t" style="left:270px;top:145.5px;font-size:12px;line-height:16px;color:#000;font-family:'Liberation Sans',sans-serif;">直线</div>
<svg style="position:absolute;left:301px;top:145px;" width="17" height="17" viewBox="0 0 17 17"><circle cx="8" cy="9" r="6.5" fill="none" stroke="#2a5aa0" stroke-width="1.6"/><path d="M8 6v6M5 9h6" stroke="#2a5aa0" stroke-width="1.3"/><path d="M3 1l3 3-4 1" fill="#2a5aa0"/><path d="M13 2h3v3" stroke="#d03030" fill="none"/></svg>
<div class="t" style="left:321px;top:145.5px;font-size:12px;line-height:16px;color:#000;font-family:'Liberation Sans',sans-serif;">点加长度</div>
<svg style="position:absolute;left:377px;top:145px;" width="14" height="16" viewBox="0 0 14 16"><path d="M2 15q1-9 10-13" stroke="#2a5aa0" stroke-width="1.5" fill="none"/><circle cx="2" cy="14" r="1.8" fill="#d03030"/><circle cx="12" cy="2" r="1.8" fill="#d03030"/></svg>
<div class="t" style="left:396px;top:145.5px;font-size:12px;line-height:16px;color:#000;font-family:'Liberation Sans',sans-serif;">三点画弧</div>
<svg style="position:absolute;left:450px;top:152px;" width="6" height="4" viewBox="0 0 6 4"><path d="M0 0h6l-3 3z" fill="#222"/></svg>
<div style="position:absolute;left:461px;top:142px;width:56px;height:22px;background:#fff"></div>
<div style="position:absolute;left:506px;top:143px;width:11px;height:20px;background:#f4f4f4"></div>
<svg style="position:absolute;left:508px;top:152px;" width="6" height="4" viewBox="0 0 6 4"><path d="M0 0h6l-3 3z" fill="#222"/></svg>
<svg style="position:absolute;left:521px;top:147px;" width="16" height="12" viewBox="0 0 16 12"><defs><linearGradient id="grc" x1="0" y1="0" x2="1" y2="1"><stop offset="0" stop-color="#e8f0ff"/><stop offset="1" stop-color="#8aa8e8"/></linearGradient></defs><rect x="0.5" y="0.5" width="15" height="11" fill="url(#grc)" stroke="#2a4ab0"/></svg>
<div class="t" style="left:541px;top:145.5px;font-size:12px;line-height:16px;color:#000;font-family:'Liberation Sans',sans-serif;">矩形</div>
<div style="position:absolute;left:572px;top:144px;width:1px;height:19px;background:#c8c8c8"></div>
<svg style="position:absolute;left:578px;top:145px;" width="15" height="15" viewBox="0 0 15 15"><rect x="0.5" y="0.5" width="14" height="14" fill="#fff" stroke="#444" stroke-dasharray="2 1"/><path d="M4 4l2 2M11 4l-2 2M4 11l2-2M11 11l-2-2" stroke="#1a1a1a" stroke-width="1.5"/></svg>
<div class="t" style="left:598px;top:145.5px;font-size:12px;line-height:16px;color:#000;font-family:'Liberation Sans',sans-serif;">智能布置</div>
<svg style="position:absolute;left:647px;top:152px;" width="6" height="4" viewBox="0 0 6 4"><path d="M0 0h6l-3 3z" fill="#222"/></svg>
<svg style="position:absolute;left:170px;top:168px;" width="1196" height="305" viewBox="0 0 1196 305"><rect x="0" y="0" width="1195" height="305" fill="#000"/><line x1="0" y1="29.5" x2="681" y2="0" stroke="#ff0000" stroke-width="1" shape-rendering="crispEdges"/><line x1="0" y1="110.5" x2="1196" y2="59.5" stroke="#ff0000" stroke-width="1" shape-rendering="crispEdges"/><line x1="0" y1="201.5" x2="1196" y2="149.5" stroke="#ff0000" stroke-width="1" shape-rendering="crispEdges"/><line x1="470.5" y1="0" x2="411.5" y2="305" stroke="#ff0000" stroke-width="1" shape-rendering="crispEdges"/><line x1="666.4" y1="0" x2="607.6" y2="305" stroke="#ff0000" stroke-width="1" shape-rendering="crispEdges"/><line x1="863.5999999999999" y1="0" x2="804.4" y2="305" stroke="#ff0000" stroke-width="1" shape-rendering="crispEdges"/><polygon points="264.9,0 445.6,0 410.5,183.60000000000002 406,204 405,183.60000000000002" fill="#a0a0a0" stroke="#a0a0a0" stroke-width="0.6"/><polygon points="264.9,0 440,0 405,183.60000000000002 228.8,190.60000000000002" fill="#e4e4e4" stroke="#e4e4e4" stroke-width="0.6"/><polygon points="228.8,190.60000000000002 405,183.60000000000002 406,204 364,248 278,252 229.60000000000002,210" fill="#b0b0b0" stroke="#b0b0b0" stroke-width="0.6"/><circle cx="597.5" cy="152.7" r="135.2" fill="none" stroke="#a8a8a8" stroke-width="1"/><circle cx="597.5" cy="17.5" r="8.5" fill="none" stroke="#a8a8a8" stroke-width="1"/><circle cx="462" cy="152.7" r="8.5" fill="none" stroke="#a8a8a8" stroke-width="1"/><circle cx="733" cy="152.7" r="8.5" fill="none" stroke="#a8a8a8" stroke-width="1"/><circle cx="597.5" cy="287.8" r="8.5" fill="none" stroke="#a8a8a8" stroke-width="1"/><polygon points="677.16,16.86 673.79,22.69 667.96,26.06 661.24,26.06 655.41,22.69 652.04,16.86 652.04,10.14 655.41,4.31 661.24,0.94 667.96,0.94 673.79,4.31 677.16,10.14" fill="none" stroke="#00b400" stroke-width="1"/><text x="664.6" y="19.0" fill="#c0c0c0" font-size="16" font-family="Liberation Sans" text-anchor="middle" font-weight="bold" transform="translate(664.6 0) scale(0.8 1) translate(-664.6 0)">2</text><polygon points="25.17,204.04 21.94,209.64 16.34,212.87 9.86,212.87 4.26,209.64 1.03,204.04 1.03,197.56 4.26,191.96 9.86,188.73 16.34,188.73 21.94,191.96 25.17,197.56" fill="none" stroke="#00b400" stroke-width="1"/><text x="13.099999999999994" y="206.3" fill="#c0c0c0" font-size="16" font-family="Liberation Sans" text-anchor="middle" font-weight="bold" transform="translate(13.099999999999994 0) scale(0.8 1) translate(-13.099999999999994 0)">C</text><polygon points="51,220 55,220 56,256 51,256" fill="#2a8cff"/><polygon points="48,220 52.5,208 57.5,220" fill="#2a8cff"/><polygon points="52,253 94,252.5 94,257 52,257" fill="#ff1010"/><polygon points="93,249 104,253.5 93,258" fill="#ff1010"/><path d="M38 202.5h9L38 212.5h9" fill="none" stroke="#2a8cff" shape-rendering="crispEdges"/><path d="M66.5 238l4.5 4.5 4.5-4.5M71 242.5v5" fill="none" stroke="#20d020" shape-rendering="crispEdges"/><path d="M93.5 243.5l8 7.5M101.5 243.5l-8 7.5" fill="none" stroke="#ff2020" shape-rendering="crispEdges"/><path d="M57.5 246v9" stroke="#20d020" stroke-width="1.5"/></svg>
<div style="position:absolute;left:1365px;top:168px;width:1px;height:305px;background:#e8e8e8"></div>
<div style="position:absolute;left:170px;top:473px;width:1196px;height:35px;background:#f0f0f0"></div>
<div style="position:absolute;left:382px;top:475px;width:264px;height:27px;background:linear-gradient(#fcfcfc,#f2f2f2);border-radius:3px"></div>
<div style="position:absolute;left:647px;top:475px;width:410px;height:27px;background:linear-gradient(#fcfcfc,#f2f2f2);border-radius:3px"></div>
<svg style="position:absolute;left:386px;top:481px;" width="3" height="16" viewBox="0 0 3 16"><rect x="0" y="0" width="2" height="2" fill="#a8a8a8"/><rect x="0" y="4" width="2" height="2" fill="#a8a8a8"/><rect x="0" y="8" width="2" height="2" fill="#a8a8a8"/><rect x="0" y="12" width="2" height="2" fill="#a8a8a8"/></svg>
<svg style="position:absolute;left:393px;top:480px;" width="14" height="14" viewBox="0 0 14 14"><path d="M0.5 0.5l13 13M13.5 0.5l-13 13" stroke="#2a70d8" stroke-width="1.2"/><rect x="5" y="5" width="4" height="4" fill="#0a3a98"/></svg>
<div class="t" style="left:412px;top:479.5px;font-size:12px;line-height:16px;color:#000;font-family:'Liberation Sans',sans-serif;">交点</div>
<div style="position:absolute;left:440px;top:476px;width:51px;height:24px;background:#dbe9f7;border:1px solid #3a7ac8"></div>
<div style="position:absolute;left:491px;top:476px;width:51px;height:24px;background:#dbe9f7;border:1px solid #3a7ac8"></div>
<svg style="position:absolute;left:443px;top:480px;" width="17" height="16" viewBox="0 0 17 16"><path d="M1 14h15M9 2v12" stroke="#1a3a80" stroke-width="1.5"/><rect x="7.5" y="12.5" width="3" height="3" fill="#1a3a80"/></svg>
<div class="t" style="left:463px;top:479.5px;font-size:12px;line-height:16px;color:#000;font-family:'Liberation Sans',sans-serif;">垂点</div>
<svg style="position:absolute;left:494px;top:481px;" width="16" height="14" viewBox="0 0 16 14"><path d="M0 7h16" stroke="#1a3a80" stroke-width="1.5"/><rect x="6" y="5" width="4" height="4" fill="#1a3a80"/></svg>
<div class="t" style="left:513px;top:479.5px;font-size:12px;line-height:16px;color:#000;font-family:'Liberation Sans',sans-serif;">中点</div>
<svg style="position:absolute;left:545px;top:479px;" width="16" height="16" viewBox="0 0 16 16"><path d="M8 1.5l6 4.5-2.3 7.5H4.3L2 6z" fill="none" stroke="#3a7ad8" stroke-width="1.1"/><g fill="#0a2a80"><circle cx="8" cy="1.5" r="1.3"/><circle cx="14" cy="6" r="1.3"/><circle cx="11.7" cy="13.5" r="1.3"/><circle cx="4.3" cy="13.5" r="1.3"/><circle cx="2" cy="6" r="1.3"/></g></svg>
<div class="t" style="left:564px;top:479.5px;font-size:12px;line-height:16px;color:#000;font-family:'Liberation Sans',sans-serif;">顶点</div>
<svg style="position:absolute;left:596px;top:478px;" width="17" height="17" viewBox="0 0 17 17"><path d="M5.5 4v12M5.5 15.5h10M5.5 5l6 8M15 7l-3.5 6" stroke="#3a7ad8" fill="none" stroke-width="1.1"/><g fill="none" stroke="#222" stroke-width=".8"><circle cx="5.5" cy="2" r="1.2"/><circle cx="1.5" cy="14" r="1.2"/><path d="M13.5 1l2 2.5M15.5 1l-2 2.5M0.5 6l1 1.5 1-1.5M1.5 7.5v1.5"/></g></svg>
<div class="t" style="left:616px;top:479.5px;font-size:12px;line-height:16px;color:#000;font-family:'Liberation Sans',sans-serif;">坐标</div>
<svg style="position:absolute;left:651px;top:481px;" width="3" height="16" viewBox="0 0 3 16"><rect x="0" y="0" width="2" height="2" fill="#a8a8a8"/><rect x="0" y="4" width="2" height="2" fill="#a8a8a8"/><rect x="0" y="8" width="2" height="2" fill="#a8a8a8"/><rect x="0" y="12" width="2" height="2" fill="#a8a8a8"/></svg>
<div style="position:absolute;left:655px;top:477px;width:58px;height:23px;background:#fff"></div>
<div style="position:absolute;left:701px;top:478px;width:11px;height:21px;background:#f4f4f4"></div>
<div class="t" style="left:657px;top:479.5px;font-size:12px;line-height:16px;color:#000;font-family:'Liberation Sans',sans-serif;">不偏移</div>
<svg style="position:absolute;left:704px;top:487px;" width="6" height="4" viewBox="0 0 6 4"><path d="M0 0h6l-3 3z" fill="#222"/></svg>
<div style="position:absolute;left:717px;top:481px;width:1px;height:18px;background:#c8c8c8"></div>
<div class="t" style="left:720px;top:479.5px;font-size:13px;line-height:16px;color:#777;font-family:'Liberation Sans',sans-serif;">X=</div>
<div style="position:absolute;left:739px;top:477px;width:58px;height:23px;background:#f4f4f4;border:1px solid #8a8a8a"></div>
<div class="t" style="left:771.9px;top:479.5px;font-size:12px;line-height:16px;color:#777;font-family:'Liberation Sans',sans-serif;">0</div>
<svg style="position:absolute;left:785px;top:479px;" width="8" height="18" viewBox="0 0 8 18"><path d="M1.5 5.5l2.5-3 2.5 3z" fill="#444"/><path d="M1.5 12.5l2.5 3 2.5-3z" fill="#444"/></svg>
<div class="t" style="left:798px;top:480.5px;font-size:13px;line-height:16px;color:#777;font-family:'Liberation Sans',sans-serif;">mm</div>
<div class="t" style="left:824px;top:479.5px;font-size:13px;line-height:16px;color:#777;font-family:'Liberation Sans',sans-serif;">Y=</div>
<div style="position:absolute;left:843px;top:477px;width:58px;height:23px;background:#f4f4f4;border:1px solid #8a8a8a"></div>
<div class="t" style="left:875.9px;top:479.5px;font-size:12px;line-height:16px;color:#777;font-family:'Liberation Sans',sans-serif;">0</div>
<svg style="position:absolute;left:889px;top:479px;" width="8" height="18" viewBox="0 0 8 18"><path d="M1.5 5.5l2.5-3 2.5 3z" fill="#444"/><path d="M1.5 12.5l2.5 3 2.5-3z" fill="#444"/></svg>
<div class="t" style="left:902px;top:480.5px;font-size:13px;line-height:16px;color:#777;font-family:'Liberation Sans',sans-serif;">mm</div>
<div style="position:absolute;left:929px;top:480px;width:1px;height:18px;background:#c8c8c8"></div>
<div style="position:absolute;left:932px;top:484px;width:11px;height:11px;background:#fff;border:1px solid #8a8a8a"></div>
<div class="t" style="left:952px;top:479.5px;font-size:12px;line-height:16px;color:#000;font-family:'Liberation Sans',sans-serif;">旋转</div>
<div style="position:absolute;left:980px;top:477px;width:68px;height:23px;background:#f4f4f4;border:1px solid #8a8a8a"></div>
<div class="t" style="left:998.5px;top:479.5px;font-size:11.5px;line-height:16px;color:#777;font-family:'Liberation Sans',sans-serif;">0.000</div>
<svg style="position:absolute;left:1036px;top:479px;" width="8" height="18" viewBox="0 0 8 18"><path d="M1.5 5.5l2.5-3 2.5 3z" fill="#444"/><path d="M1.5 12.5l2.5 3 2.5-3z" fill="#444"/></svg>
<div class="t" style="left:1050px;top:478.5px;font-size:12px;line-height:16px;color:#555;font-family:'Liberation Sans',sans-serif;">°</div>
<div style="position:absolute;left:170px;top:508px;width:13px;height:199px;background:#f0f0f0"></div>
<svg style="position:absolute;left:171px;top:507px;" width="10" height="10" viewBox="0 0 10 10"><rect x="0.5" y="0.5" width="9" height="9" fill="#f6f6f6" stroke="#5a3a4a"/><path d="M0.5 0.5h9L0.5 9.5z" fill="#e89080"/><path d="M2 2l6 6M8 2l-6 6" stroke="#fff" stroke-width="2"/><path d="M2 2l6 6M8 2l-6 6" stroke="#333" stroke-width=".8"/></svg>
<svg style="position:absolute;left:171px;top:520px;" width="8" height="186" viewBox="0 0 8 186"><rect x="1" y="0" width="1.5" height="1.5" fill="#b8b8b8"/><rect x="5" y="0" width="1.5" height="1.5" fill="#b8b8b8"/><rect x="1" y="5" width="1.5" height="1.5" fill="#b8b8b8"/><rect x="5" y="5" width="1.5" height="1.5" fill="#b8b8b8"/><rect x="1" y="10" width="1.5" height="1.5" fill="#b8b8b8"/><rect x="5" y="10" width="1.5" height="1.5" fill="#b8b8b8"/><rect x="1" y="15" width="1.5" height="1.5" fill="#b8b8b8"/><rect x="5" y="15" width="1.5" height="1.5" fill="#b8b8b8"/><rect x="1" y="20" width="1.5" height="1.5" fill="#b8b8b8"/><rect x="5" y="20" width="1.5" height="1.5" fill="#b8b8b8"/><rect x="1" y="25" width="1.5" height="1.5" fill="#b8b8b8"/><rect x="5" y="25" width="1.5" height="1.5" fill="#b8b8b8"/><rect x="1" y="30" width="1.5" height="1.5" fill="#b8b8b8"/><rect x="5" y="30" width="1.5" height="1.5" fill="#b8b8b8"/><rect x="1" y="35" width="1.5" height="1.5" fill="#b8b8b8"/><rect x="5" y="35" width="1.5" height="1.5" fill="#b8b8b8"/><rect x="1" y="40" width="1.5" height="1.5" fill="#b8b8b8"/><rect x="5" y="40" width="1.5" height="1.5" fill="#b8b8b8"/><rect x="1" y="45" width="1.5" height="1.5" fill="#b8b8b8"/><rect x="5" y="45" width="1.5" height="1.5" fill="#b8b8b8"/><rect x="1" y="50" width="1.5" height="1.5" fill="#b8b8b8"/><rect x="5" y="50" width="1.5" height="1.5" fill="#b8b8b8"/><rect x="1" y="55" width="1.5" height="1.5" fill="#b8b8b8"/><rect x="5" y="55" width="1.5" height="1.5" fill="#b8b8b8"/><rect x="1" y="60" width="1.5" height="1.5" fill="#b8b8b8"/><rect x="5" y="60" width="1.5" height="1.5" fill="#b8b8b8"/><rect x="1" y="65" width="1.5" height="1.5" fill="#b8b8b8"/><rect x="5" y="65" width="1.5" height="1.5" fill="#b8b8b8"/><rect x="1" y="70" width="1.5" height="1.5" fill="#b8b8b8"/><rect x="5" y="70" width="1.5" height="1.5" fill="#b8b8b8"/><rect x="1" y="75" width="1.5" height="1.5" fill="#b8b8b8"/><rect x="5" y="75" width="1.5" height="1.5" fill="#b8b8b8"/><rect x="1" y="80" width="1.5" height="1.5" fill="#b8b8b8"/><rect x="5" y="80" width="1.5" height="1.5" fill="#b8b8b8"/><rect x="1" y="85" width="1.5" height="1.5" fill="#b8b8b8"/><rect x="5" y="85" width="1.5" height="1.5" fill="#b8b8b8"/><rect x="1" y="90" width="1.5" height="1.5" fill="#b8b8b8"/><rect x="5" y="90" width="1.5" height="1.5" fill="#b8b8b8"/><rect x="1" y="95" width="1.5" height="1.5" fill="#b8b8b8"/><rect x="5" y="95" width="1.5" height="1.5" fill="#b8b8b8"/><rect x="1" y="100" width="1.5" height="1.5" fill="#b8b8b8"/><rect x="5" y="100" width="1.5" height="1.5" fill="#b8b8b8"/><rect x="1" y="105" width="1.5" height="1.5" fill="#b8b8b8"/><rect x="5" y="105" width="1.5" height="1.5" fill="#b8b8b8"/><rect x="1" y="110" width="1.5" height="1.5" fill="#b8b8b8"/><rect x="5" y="110" width="1.5" height="1.5" fill="#b8b8b8"/><rect x="1" y="115" width="1.5" height="1.5" fill="#b8b8b8"/><rect x="5" y="115" width="1.5" height="1.5" fill="#b8b8b8"/><rect x="1" y="120" width="1.5" height="1.5" fill="#b8b8b8"/><rect x="5" y="120" width="1.5" height="1.5" fill="#b8b8b8"/><rect x="1" y="125" width="1.5" height="1.5" fill="#b8b8b8"/><rect x="5" y="125" width="1.5" height="1.5" fill="#b8b8b8"/><rect x="1" y="130" width="1.5" height="1.5" fill="#b8b8b8"/><rect x="5" y="130" width="1.5" height="1.5" fill="#b8b8b8"/><rect x="1" y="135" width="1.5" height="1.5" fill="#b8b8b8"/><rect x="5" y="135" width="1.5" height="1.5" fill="#b8b8b8"/><rect x="1" y="140" width="1.5" height="1.5" fill="#b8b8b8"/><rect x="5" y="140" width="1.5" height="1.5" fill="#b8b8b8"/><rect x="1" y="145" width="1.5" height="1.5" fill="#b8b8b8"/><rect x="5" y="145" width="1.5" height="1.5" fill="#b8b8b8"/><rect x="1" y="150" width="1.5" height="1.5" fill="#b8b8b8"/><rect x="5" y="150" width="1.5" height="1.5" fill="#b8b8b8"/><rect x="1" y="155" width="1.5" height="1.5" fill="#b8b8b8"/><rect x="5" y="155" width="1.5" height="1.5" fill="#b8b8b8"/><rect x="1" y="160" width="1.5" height="1.5" fill="#b8b8b8"/><rect x="5" y="160" width="1.5" height="1.5" fill="#b8b8b8"/><rect x="1" y="165" width="1.5" height="1.5" fill="#b8b8b8"/><rect x="5" y="165" width="1.5" height="1.5" fill="#b8b8b8"/><rect x="1" y="170" width="1.5" height="1.5" fill="#b8b8b8"/><rect x="5" y="170" width="1.5" height="1.5" fill="#b8b8b8"/><rect x="1" y="175" width="1.5" height="1.5" fill="#b8b8b8"/><rect x="5" y="175" width="1.5" height="1.5" fill="#b8b8b8"/><rect x="1" y="180" width="1.5" height="1.5" fill="#b8b8b8"/><rect x="5" y="180" width="1.5" height="1.5" fill="#b8b8b8"/><rect x="1" y="185" width="1.5" height="1.5" fill="#b8b8b8"/><rect x="5" y="185" width="1.5" height="1.5" fill="#b8b8b8"/></svg>
<div style="position:absolute;left:183px;top:508px;width:1183px;height:25px;background:linear-gradient(#fcfcfc,#efefef)"></div>
<svg style="position:absolute;left:189px;top:512px;" width="10" height="14" viewBox="0 0 10 14"><path d="M1.5 1v12" stroke="#bbb" stroke-width="2"/><path d="M9 1L3 7l6 6z" fill="#d8d8d8" stroke="#bbb"/></svg>
<svg style="position:absolute;left:215px;top:512px;" width="9" height="14" viewBox="0 0 9 14"><path d="M8 1L2 7l6 6z" fill="#d8d8d8" stroke="#c4c4c4"/></svg>
<svg style="position:absolute;left:238px;top:512px;" width="9" height="14" viewBox="0 0 9 14"><path d="M1 1l6 6-6 6z" fill="#d8d8d8" stroke="#c4c4c4"/></svg>
<svg style="position:absolute;left:261px;top:512px;" width="10" height="14" viewBox="0 0 10 14"><path d="M8.5 1v12" stroke="#bbb" stroke-width="2"/><path d="M1 1l6 6-6 6z" fill="#d8d8d8" stroke="#bbb"/></svg>
<div style="position:absolute;left:279px;top:511px;width:1px;height:16px;background:#c8c8c8"></div>
<svg style="position:absolute;left:288px;top:513px;" width="9" height="12" viewBox="0 0 9 12"><path d="M4.5 1l4 4H6.5v5h-4V5H0.5z" fill="#d8d8d8" stroke="#bbb"/></svg>
<svg style="position:absolute;left:311px;top:513px;" width="9" height="12" viewBox="0 0 9 12"><path d="M4.5 11l4-4H6.5V2h-4v5H0.5z" fill="#d8d8d8" stroke="#bbb"/></svg>
<div style="position:absolute;left:330px;top:511px;width:1px;height:16px;background:#c8c8c8"></div>
<svg style="position:absolute;left:336px;top:511px;" width="18" height="16" viewBox="0 0 18 16"><path d="M1 1h4M1 1v14h4M1 8h4" stroke="#bbb" fill="none"/><path d="M8 8h9" stroke="#bbb"/><rect x="13" y="6" width="4" height="4" fill="none" stroke="#bbb"/></svg>
<div class="t" style="left:358px;top:511.5px;font-size:12px;line-height:16px;color:#a8a8a8;font-family:'Liberation Sans',sans-serif;">插入</div>
<svg style="position:absolute;left:388px;top:511px;" width="16" height="16" viewBox="0 0 16 16"><path d="M1 3h8M1 8h10M1 13h8" stroke="#bbb"/><path d="M11 5l3 3-3 3" stroke="#bbb" fill="none"/></svg>
<div class="t" style="left:407px;top:511.5px;font-size:12px;line-height:16px;color:#a8a8a8;font-family:'Liberation Sans',sans-serif;">删除</div>
<svg style="position:absolute;left:441px;top:511px;" width="14" height="16" viewBox="0 0 14 16"><path d="M1 3v12h12" stroke="#bbb" stroke-dasharray="1 1" fill="none"/><path d="M4 15V6M7 15V9M10 15V4" stroke="#c4c4c4"/></svg>
<div class="t" style="left:459px;top:511.5px;font-size:12px;line-height:16px;color:#a8a8a8;font-family:'Liberation Sans',sans-serif;">缩尺配筋</div>
<svg style="position:absolute;left:514px;top:511px;" width="16" height="16" viewBox="0 0 16 16"><path d="M2 14l5-12 7 6-6 6z" fill="#e0e0e0" stroke="#bbb"/></svg>
<div class="t" style="left:534px;top:511.5px;font-size:12px;line-height:16px;color:#a8a8a8;font-family:'Liberation Sans',sans-serif;">钢筋信息</div>
<svg style="position:absolute;left:590px;top:512px;" width="15" height="14" viewBox="0 0 15 14"><rect x="0.5" y="0.5" width="14" height="12" fill="#f0f0f0" stroke="#c0c0c0"/><path d="M3 7h8" stroke="#c4c4c4"/></svg>
<div class="t" style="left:609px;top:511.5px;font-size:12px;line-height:16px;color:#a8a8a8;font-family:'Liberation Sans',sans-serif;">钢筋图库</div>
<svg style="position:absolute;left:664px;top:512px;" width="16" height="15" viewBox="0 0 16 15"><rect x="0.5" y="0.5" width="11" height="13" fill="#fff" stroke="#3a6ac0"/><path d="M3 4h6M3 7h6" stroke="#3a6ac0"/><path d="M7 8h5V5l4 4-4 4v-3H7z" fill="#2a7ad8"/></svg>
<div class="t" style="left:683px;top:511.5px;font-size:12px;line-height:16px;color:#000;font-family:'Liberation Sans',sans-serif;">其他</div>
<svg style="position:absolute;left:710px;top:518px;" width="6" height="4" viewBox="0 0 6 4"><path d="M0 0h6l-3 3z" fill="#222"/></svg>
<div class="t" style="left:725px;top:511.5px;font-size:12px;line-height:16px;color:#000;font-family:'Liberation Sans',sans-serif;">关闭</div>
<div style="position:absolute;left:757px;top:511px;width:1px;height:16px;background:#c8c8c8"></div>
<div class="t" style="left:764px;top:511.5px;font-size:12px;line-height:16px;color:#000;font-family:'Liberation Sans',sans-serif;">单构件钢筋总重(kg)：0</div>
<div style="position:absolute;left:183px;top:533px;width:1183px;height:174px;background:#fff"></div>
<div style="position:absolute;left:183px;top:533px;width:1182px;height:1px;background:#a0a0a0"></div>
<div style="position:absolute;left:183px;top:534px;width:1182px;height:19px;background:linear-gradient(#fdfdfd,#ececec)"></div>
<div style="position:absolute;left:183px;top:553px;width:1182px;height:1px;background:#c8c8c8"></div>
<div style="position:absolute;left:183px;top:572px;width:1182px;height:1px;background:#c8c8c8"></div>
<div style="position:absolute;left:290px;top:534px;width:55px;height:19px;background:linear-gradient(#f9d9a0,#f0b860)"></div>
<div style="position:absolute;left:184px;top:553px;width:32px;height:19px;background:#fdd68c"></div>
<div style="position:absolute;left:290px;top:553px;width:55px;height:19px;background:#d8e8f8"></div>
<div style="position:absolute;left:289px;top:553px;width:2px;height:19px;background:#000"></div>
<div style="position:absolute;left:216px;top:534px;width:1px;height:38px;background:#d0d0d0"></div>
<div style="position:absolute;left:289px;top:534px;width:1px;height:38px;background:#d0d0d0"></div>
<div style="position:absolute;left:345px;top:534px;width:1px;height:38px;background:#d0d0d0"></div>
<div style="position:absolute;left:381px;top:534px;width:1px;height:38px;background:#d0d0d0"></div>
<div style="position:absolute;left:414px;top:534px;width:1px;height:38px;background:#d0d0d0"></div>
<div style="position:absolute;left:615px;top:534px;width:1px;height:38px;background:#d0d0d0"></div>
<div style="position:absolute;left:781px;top:534px;width:1px;height:38px;background:#d0d0d0"></div>
<div style="position:absolute;left:937px;top:534px;width:1px;height:38px;background:#d0d0d0"></div>
<div style="position:absolute;left:1019px;top:534px;width:1px;height:38px;background:#d0d0d0"></div>
<div style="position:absolute;left:1079px;top:534px;width:1px;height:38px;background:#d0d0d0"></div>
<div style="position:absolute;left:1117px;top:534px;width:1px;height:38px;background:#d0d0d0"></div>
<div style="position:absolute;left:1157px;top:534px;width:1px;height:38px;background:#d0d0d0"></div>
<div style="position:absolute;left:1205px;top:534px;width:1px;height:38px;background:#d0d0d0"></div>
<div style="position:absolute;left:1267px;top:534px;width:1px;height:38px;background:#d0d0d0"></div>
<div style="position:absolute;left:1327px;top:534px;width:1px;height:38px;background:#d0d0d0"></div>
<div style="position:absolute;left:1364px;top:533px;width:1px;height:40px;background:#a0a0a0"></div>
<div class="t" style="left:241.0px;top:536.0px;font-size:12px;line-height:16px;color:#000;font-family:'Liberation Sans',sans-serif;">筋号</div>
<div class="t" style="left:293.0px;top:536.0px;font-size:12px;line-height:16px;color:#5a0a5a;font-family:'Liberation Sans',sans-serif;">直径<span class="m">(mm)</span></div>
<div class="t" style="left:350.8px;top:536.0px;font-size:12px;line-height:16px;color:#000;font-family:'Liberation Sans',sans-serif;">级别</div>
<div class="t" style="left:385.3px;top:536.0px;font-size:12px;line-height:16px;color:#000;font-family:'Liberation Sans',sans-serif;">图号</div>
<div class="t" style="left:501.6px;top:536.0px;font-size:12px;line-height:16px;color:#000;font-family:'Liberation Sans',sans-serif;">图形</div>
<div class="t" style="left:673.0px;top:536.0px;font-size:12px;line-height:16px;color:#000;font-family:'Liberation Sans',sans-serif;">计算公式</div>
<div class="t" style="left:834.8px;top:536.0px;font-size:12px;line-height:16px;color:#000;font-family:'Liberation Sans',sans-serif;">公式描述</div>
<div class="t" style="left:939.0px;top:536.0px;font-size:12px;line-height:16px;color:#000;font-family:'Liberation Sans',sans-serif;">弯曲调整<span class="m">(mm)</span></div>
<div class="t" style="left:1024.0px;top:536.0px;font-size:12px;line-height:16px;color:#000;font-family:'Liberation Sans',sans-serif;">长度<span class="m">(mm)</span></div>
<div class="t" style="left:1085.0px;top:536.0px;font-size:12px;line-height:16px;color:#000;font-family:'Liberation Sans',sans-serif;">根数</div>
<div class="t" style="left:1124.7px;top:536.0px;font-size:12px;line-height:16px;color:#000;font-family:'Liberation Sans',sans-serif;">搭接</div>
<div class="t" style="left:1159.0px;top:536.0px;font-size:12px;line-height:16px;color:#000;font-family:'Liberation Sans',sans-serif;">损耗<span class="m">(%)</span></div>
<div class="t" style="left:1211.0px;top:536.0px;font-size:12px;line-height:16px;color:#000;font-family:'Liberation Sans',sans-serif;">单重<span class="m">(kg)</span></div>
<div class="t" style="left:1272.0px;top:536.0px;font-size:12px;line-height:16px;color:#000;font-family:'Liberation Sans',sans-serif;">总重<span class="m">(kg)</span></div>
<div class="t" style="left:1338px;top:536.0px;font-size:12px;line-height:16px;color:#000;font-family:'Liberation Sans',sans-serif;">钢筋</div>
<div class="t" style="left:194px;top:555.0px;font-size:12px;line-height:16px;color:#4a0a5a;font-family:'Liberation Sans',sans-serif;"><span class="m" style="font-size:11px">1</span><span style="font-family:Liberation Mono;font-size:13px;position:relative;top:2px;font-weight:bold">*</span></div>
<div style="position:absolute;left:183px;top:687px;width:1183px;height:17px;background:#f0f0f0"></div>
<div style="position:absolute;left:201px;top:688px;width:760px;height:15px;background:#cdcdcd"></div>
<svg style="position:absolute;left:189px;top:691px;" width="6" height="10" viewBox="0 0 6 10"><path d="M5 1L1 5l4 4" stroke="#606060" fill="none" stroke-width="2"/></svg>
<svg style="position:absolute;left:1351px;top:691px;" width="6" height="10" viewBox="0 0 6 10"><path d="M1 1l4 4-4 4" stroke="#606060" fill="none" stroke-width="2"/></svg>
<div style="position:absolute;left:1365px;top:533px;width:1px;height:171px;background:#f0f0f0"></div>
<div style="position:absolute;left:182px;top:533px;width:1px;height:172px;background:#a0a0a0"></div>
<div style="position:absolute;left:182px;top:704px;width:1183px;height:1px;background:#a0a0a0"></div>
<div style="position:absolute;left:1364px;top:533px;width:1px;height:172px;background:#a0a0a0"></div>
<div style="position:absolute;left:0px;top:704px;width:1366px;height:24px;background:#f0f0f0"></div>
<div style="position:absolute;left:0px;top:705px;width:1366px;height:1px;background:#a8a8a8"></div>
<div style="position:absolute;left:0px;top:706px;width:1366px;height:1px;background:#fff"></div>
<div style="position:absolute;left:0px;top:707px;width:1366px;height:21px;background:linear-gradient(#fbfbfb,#efefef)"></div>
<div style="position:absolute;left:0px;top:708px;width:148px;height:20px;border:1px solid #dadada;border-top-color:#e4e4e4"></div>
<div style="position:absolute;left:150px;top:708px;width:76px;height:20px;border:1px solid #dadada;border-top-color:#e4e4e4"></div>
<div style="position:absolute;left:229px;top:708px;width:97px;height:20px;border:1px solid #dadada;border-top-color:#e4e4e4"></div>
<div style="position:absolute;left:329px;top:708px;width:48px;height:20px;border:1px solid #dadada;border-top-color:#e4e4e4"></div>
<div style="position:absolute;left:380px;top:708px;width:913px;height:20px;border:1px solid #dadada;border-top-color:#e4e4e4"></div>
<div style="position:absolute;left:1296px;top:708px;width:70px;height:20px;border:1px solid #dadada;border-top-color:#e4e4e4"></div>
<div class="t" style="left:2px;top:709.5px;font-size:12px;line-height:16px;color:#000;font-family:'Liberation Sans',sans-serif;"><span class="m">X=175154 Y=11807</span></div>
<div class="t" style="left:151px;top:709.5px;font-size:12px;line-height:16px;color:#000;font-family:'Liberation Sans',sans-serif;">层高<span class="m">:2.15m</span></div>
<div class="t" style="left:232px;top:709.5px;font-size:12px;line-height:16px;color:#000;font-family:'Liberation Sans',sans-serif;">底标高<span class="m">:-2.2m</span></div>
<div class="t" style="left:332px;top:709.5px;font-size:12px;line-height:16px;color:#000;font-family:'Liberation Sans',sans-serif;"><span class="m">0</span></div>
<div class="t" style="left:1297px;top:709.5px;font-size:12px;line-height:16px;color:#000;font-family:'Liberation Sans',sans-serif;"><span class="m">188.7 FPS</span></div>
<div style="position:absolute;left:0px;top:728px;width:1366px;height:40px;background:#05141a"></div>
<div style="position:absolute;left:0px;top:728px;width:48px;height:40px;background:#0a0a0a"></div>
<svg style="position:absolute;left:16px;top:740px;" width="17" height="17" viewBox="0 0 17 17"><path d="M0 2.5L7 1.5V8H0zM8 1.3L17 0V8H8zM0 9h7v6.5L0 14.5zM8 9h9v8L8 15.7z" fill="#fff"/></svg>
<div style="position:absolute;left:48px;top:728px;width:344px;height:40px;background:#f2f2f2"></div>
<div style="position:absolute;left:57px;top:737px;width:22px;height:22px;border-radius:50%;border:3px solid #1a1a1a;box-shadow:0 0 2px #555"></div>
<div class="t" style="left:88px;top:739.0px;font-size:14px;line-height:18px;color:#444;font-family:'Liberation Sans',sans-serif;">在这里输入你要搜索的内容</div>
<svg style="position:absolute;left:366px;top:740px;" width="12" height="17" viewBox="0 0 12 17"><rect x="3" y="0.5" width="6" height="11" rx="3" fill="none" stroke="#333"/><path d="M1 7a5 5 0 0 0 10 0M6 12v4M3 16.5h6" stroke="#333" fill="none"/></svg>
<svg style="position:absolute;left:407px;top:740px;" width="17" height="16" viewBox="0 0 17 16"><rect x="2.5" y="3.5" width="10" height="9" fill="none" stroke="#fff" stroke-width="1.2"/><path d="M0 1h15M0 15h15" stroke="#fff" stroke-width="1.2"/><rect x="14.5" y="5" width="2" height="2" fill="#fff"/><rect x="14.5" y="9" width="2" height="6" fill="#fff"/></svg>
<svg style="position:absolute;left:455px;top:737px;" width="23" height="23" viewBox="0 0 23 23"><g fill="#e8e8e8"><circle cx="6.5" cy="6.5" r="5.8"/><circle cx="16.5" cy="6.5" r="5.8"/><circle cx="6.5" cy="16.5" r="5.8"/><circle cx="16.5" cy="16.5" r="5.8"/><rect x="4" y="4" width="15" height="15"/></g><path d="M11.5 0.5q-3 4 0 11t0 11M0.5 11.5q4 3 11 0t11 0" fill="none" stroke="#05141a" stroke-width="1.2"/></svg>
<svg style="position:absolute;left:507px;top:736px;" width="22" height="24" viewBox="0 0 22 24"><path d="M4.5 13h13a6.5 6.5 0 1 0-2 5" fill="none" stroke="#e8e8e8" stroke-width="3.2"/><path d="M2 21q-2-6 5-12 8-7 14-5" fill="none" stroke="#e8e8e8" stroke-width="1.4"/></svg>
<svg style="position:absolute;left:557px;top:733px;" width="28" height="26" viewBox="0 0 28 26"><path d="M11 19a4 4 0 1 1 4-5M6 20a8 8 0 1 1 11-10M9 23a9 9 0 0 0 9-13" fill="none" stroke="#e0e0e0" stroke-width="1.3"/><path d="M22 1c-3 0-5 2.5-5 6v4l-1.5 1.5h13l-1.5-1.5V7c0-3.5-2-6-5-6z" fill="#f0b400"/><rect x="20.5" y="12.5" width="3" height="2" fill="#f0b400"/></svg>
<div style="position:absolute;left:609px;top:736px;width:24px;height:23px;border-radius:3px;background:linear-gradient(#e07a2a,#b85410);border:1px solid #888"></div>
<div class="t" style="left:611px;top:740.0px;font-size:9px;line-height:16px;color:#fde8c8;font-family:'Liberation Sans',sans-serif;font-weight:bold">PDF</div>
<div style="position:absolute;left:601px;top:766px;width:40px;height:2px;background:#76b9ed"></div>
<div style="position:absolute;left:658px;top:736px;width:24px;height:23px;border-radius:3px;background:#2ab0c8"></div>
<svg style="position:absolute;left:662px;top:739px;" width="18" height="17" viewBox="0 0 18 17"><path d="M3 2h9M7.5 2v11M3 13h9" stroke="#f0e070" stroke-width="2"/><circle cx="13" cy="9" r="3" fill="none" stroke="#fff" stroke-width="1.3"/><path d="M15 11l2 2" stroke="#fff" stroke-width="1.5"/><path d="M0 16h18" stroke="#e04040"/></svg>
<div style="position:absolute;left:650px;top:766px;width:40px;height:2px;background:#76b9ed"></div>
<div style="position:absolute;left:907px;top:728px;width:16px;height:40px;background:#e8e8e8"></div>
<svg style="position:absolute;left:910px;top:734px;" width="10" height="6" viewBox="0 0 10 6"><path d="M1 5l4-4 4 4" fill="none" stroke="#333" stroke-width="1.3"/></svg>
<svg style="position:absolute;left:910px;top:755px;" width="10" height="6" viewBox="0 0 10 6"><path d="M1 1l4 4 4-4" fill="none" stroke="#333" stroke-width="1.3"/></svg>
<svg style="position:absolute;left:945px;top:740px;" width="16" height="15" viewBox="0 0 16 15"><circle cx="5" cy="7" r="3" fill="none" stroke="#fff" stroke-width="1.2"/><circle cx="11" cy="4" r="2.5" fill="none" stroke="#fff" stroke-width="1.2"/><path d="M0 15q1-5 5-5 4 0 5 5M9 9q2-2 4 0 2 2 2 4" fill="none" stroke="#fff" stroke-width="1.2"/></svg>
<div class="t" style="left:1003px;top:731.5px;font-size:13px;line-height:16px;color:#fff;font-family:'Liberation Sans',sans-serif;">36%</div>
<div class="t" style="left:992px;top:749.0px;font-size:13px;line-height:16px;color:#fff;font-family:'Liberation Sans',sans-serif;">CPU使用</div>
<svg style="position:absolute;left:1061px;top:742px;" width="12" height="8" viewBox="0 0 12 8"><path d="M1 7l5-5 5 5" fill="none" stroke="#fff" stroke-width="1.3"/></svg>
<svg style="position:absolute;left:1081px;top:740px;" width="18" height="14" viewBox="0 0 18 14"><rect x="6.5" y="3.5" width="10" height="9" fill="none" stroke="#fff" stroke-width="1.2"/><path d="M1 6h4M3 3v6M6 8h-3" stroke="#fff" stroke-width="1.2"/></svg>
<svg style="position:absolute;left:1108px;top:741px;" width="15" height="13" viewBox="0 0 15 13"><path d="M1 12a12 12 0 0 1 12-11M4 12a9 9 0 0 1 9-8M7 12a6 6 0 0 1 6-5" fill="none" stroke="#fff" stroke-width="1.1" opacity=".8"/><circle cx="12" cy="11" r="2" fill="#fff"/></svg>
<svg style="position:absolute;left:1129px;top:740px;" width="18" height="16" viewBox="0 0 18 16"><path d="M1 5h4l5-4v14l-5-4H1z" fill="none" stroke="#fff" stroke-width="1.2"/><path d="M12 5q2 3 0 6M14 3q4 5 0 10" fill="none" stroke="#fff" stroke-width="1.1"/></svg>
<svg style="position:absolute;left:1154px;top:740px;" width="24" height="14" viewBox="0 0 24 14"><rect x="0.5" y="0.5" width="23" height="13" fill="none" stroke="#fff"/><rect x="3" y="3" width="2" height="1.5" fill="#fff"/><rect x="3" y="6" width="2" height="1.5" fill="#fff"/><rect x="6" y="3" width="2" height="1.5" fill="#fff"/><rect x="6" y="6" width="2" height="1.5" fill="#fff"/><rect x="9" y="3" width="2" height="1.5" fill="#fff"/><rect x="9" y="6" width="2" height="1.5" fill="#fff"/><rect x="12" y="3" width="2" height="1.5" fill="#fff"/><rect x="12" y="6" width="2" height="1.5" fill="#fff"/><rect x="15" y="3" width="2" height="1.5" fill="#fff"/><rect x="15" y="6" width="2" height="1.5" fill="#fff"/><rect x="18" y="3" width="2" height="1.5" fill="#fff"/><rect x="18" y="6" width="2" height="1.5" fill="#fff"/><rect x="6" y="9" width="12" height="1.5" fill="#fff"/></svg>
<div class="t" style="left:1187px;top:740.0px;font-size:14px;line-height:16px;color:#fff;font-family:'Liberation Sans',sans-serif;">中</div>
<svg style="position:absolute;left:1213px;top:738px;" width="18" height="19" viewBox="0 0 18 19"><path d="M3 1h12l3 3v12l-3 3H3l-3-3V4z" fill="#e84a1a"/><path d="M13 6q-2-2-5-1-3 1-1 3 5 2 2 5-3 1-5-1" fill="none" stroke="#fff" stroke-width="2.5"/></svg>
<div class="t" style="left:1261px;top:731.0px;font-size:13px;line-height:16px;color:#fff;font-family:'Liberation Sans',sans-serif;">16:26</div>
<div class="t" style="left:1243px;top:749.0px;font-size:13px;line-height:16px;color:#fff;font-family:'Liberation Sans',sans-serif;">2018/10/12</div>
<svg style="position:absolute;left:1324px;top:737px;" width="26" height="24" viewBox="0 0 26 24"><path d="M1 1h18v12H8l-4 4v-4H1z" fill="#fff"/><path d="M4 4h12M4 7h12M4 10h8" stroke="#05141a"/><circle cx="17" cy="17" r="6.5" fill="#333" stroke="#999" stroke-width="1.2"/><text x="17" y="21" fill="#fff" font-size="10" font-family="Liberation Sans" text-anchor="middle" font-weight="bold">1</text></svg>
</body></html>
